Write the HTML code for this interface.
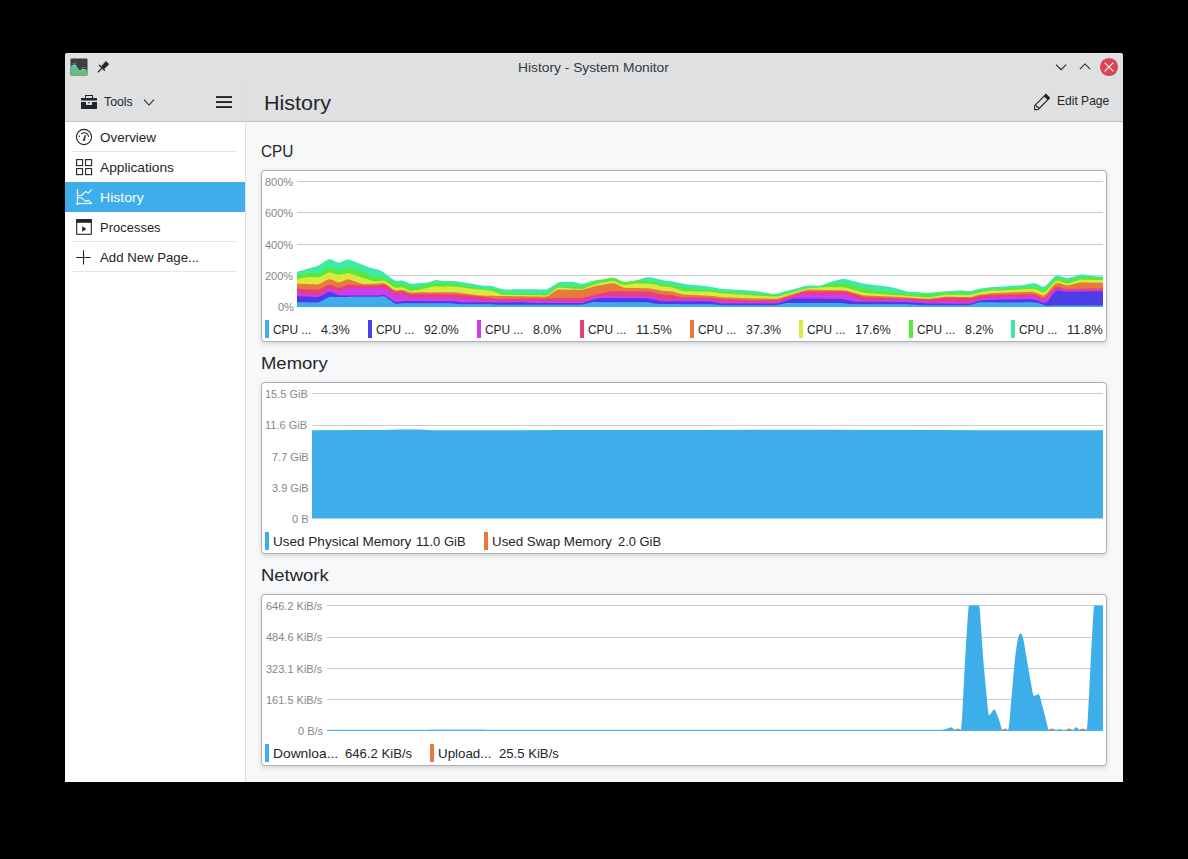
<!DOCTYPE html>
<html><head><meta charset="utf-8">
<style>
html,body{margin:0;padding:0;}
body{width:1188px;height:859px;background:#000;position:relative;overflow:hidden;font-family:"Liberation Sans",sans-serif;color:#232629;}
.a{position:absolute;}
.t{position:absolute;white-space:nowrap;line-height:1;transform-origin:0 0;}
.s13{font-size:13.33px;}
.s11{font-size:11px;color:#84878a;}
.s16{font-size:16px;}
.s20{font-size:20px;}
#win{left:65px;top:53px;width:1058px;height:729px;background:#fff;border-radius:3px 3px 0 0;overflow:hidden;}
#hdr{left:0;top:0;width:1058px;height:68px;background:#dee0e2;}
#hdrline{left:0;top:68px;width:1058px;height:1px;background:#bfc1c4;}
#side{left:0;top:69px;width:180px;height:660px;background:#fff;}
#vdiv{left:180px;top:29px;width:1px;height:700px;background:#dfdddc;}
#content{left:181px;top:69px;width:877px;height:660px;background:#f7f8f9;}
.sep{position:absolute;left:8px;width:164px;height:1px;background:#e3e4e6;}
.card{position:absolute;width:844px;height:170px;background:#fff;border:1px solid #aeb0b3;border-radius:4px;box-shadow:0 1.5px 4px rgba(0,0,0,0.14);}
.grid{position:absolute;height:1px;background:#c9cbce;}
.lb{position:absolute;width:4px;height:18px;}
</style></head><body>
<div id="win" class="a">
  <div id="hdr" class="a"></div>
  <div class="a" style="left:0;top:0;width:1058px;height:1px;background:#eceeef;"></div>
  <div id="hdrline" class="a"></div>
  <div id="side" class="a"></div>
  <div id="content" class="a"></div>
  <div id="vdiv" class="a"></div>
</div>

<!-- titlebar -->
<svg class="a" style="left:70px;top:58px" width="18" height="18" viewBox="0 0 18 18">
  <defs><linearGradient id="ag" x1="0" y1="0" x2="0" y2="1"><stop offset="0" stop-color="#4fc4b6"/><stop offset="1" stop-color="#74b865"/></linearGradient></defs>
  <rect x="0.5" y="0.5" width="17" height="17" rx="1" fill="#3a3f44"/>
  <path d="M0.5,9.6 C1.5,7.5 2.6,6.6 4.5,6.6 C6.5,6.6 8,11.5 9.6,11.9 C10.8,12.1 11.8,10.8 13.4,10.8 C15,10.8 16,11.8 17.5,12.4 L17.5,16.5 Q17.5,17.5 16.5,17.5 L1.5,17.5 Q0.5,17.5 0.5,16.5 Z" fill="url(#ag)"/>
  <g fill="#7f8a8c"><circle cx="3.3" cy="5.4" r="0.65"/><circle cx="5.5" cy="5.4" r="0.65"/><circle cx="12.5" cy="9.5" r="0.65"/><circle cx="14.5" cy="9.5" r="0.65"/></g>
  <g fill="#9fe0cf"><circle cx="3.4" cy="7.5" r="0.65"/><circle cx="5.4" cy="7.5" r="0.65"/><circle cx="12.5" cy="11.6" r="0.65"/><circle cx="14.3" cy="11.6" r="0.65"/></g>
</svg>
<svg class="a" style="left:96px;top:59px" width="16" height="16" viewBox="0 0 16 16">
  <path d="M2.4,12.7 L6,9.1" stroke="#232629" stroke-width="1.3" stroke-linecap="round"/>
  <path d="M3.4,6.3 L8.6,11.4" stroke="#232629" stroke-width="1.3" stroke-linecap="round"/>
  <path d="M5.3,7.4 L9.9,2.3 L12.9,5.2 L8.0,9.9 Z" fill="#232629" stroke="#232629" stroke-width="0.4" stroke-linejoin="round"/>
</svg>
<div class="t s13" style="left:518px;top:61px;color:#363a3e;transform:scaleX(1.034);">History - System Monitor</div>
<svg class="a" style="left:1054px;top:61px" width="14" height="10" viewBox="0 0 14 10">
  <path d="M2,3.6 L7.1,8.7 L12.2,3.6" fill="none" stroke="#232629" stroke-width="1.05"/>
</svg>
<svg class="a" style="left:1078px;top:60px" width="14" height="10" viewBox="0 0 14 10">
  <path d="M1.8,9.1 L7,3.9 L12.2,9.1" fill="none" stroke="#232629" stroke-width="1.05"/>
</svg>
<svg class="a" style="left:1099px;top:57px" width="20" height="20" viewBox="0 0 20 20">
  <circle cx="10" cy="10" r="9.1" fill="#da4453"/>
  <path d="M5.6,5.6 L14.4,14.4 M14.4,5.6 L5.6,14.4" stroke="#fff" stroke-width="1.1"/>
</svg>

<!-- sidebar header -->
<svg class="a" style="left:80px;top:94px" width="18" height="16" viewBox="0 0 18 16">
  <rect x="5.5" y="1.5" width="7" height="3" fill="none" stroke="#232629" stroke-width="1"/>
  <rect x="1" y="4" width="16" height="2.5" fill="#232629"/>
  <path d="M1,8 L6,8 L6,11 L12,11 L12,8 L17,8 L17,15 L1,15 Z" fill="#232629"/>
  <rect x="8" y="8.2" width="2" height="1.1" rx="0.5" fill="#232629"/>
</svg>
<div class="t s13" style="left:104px;top:95px;transform:scaleX(0.923);">Tools</div>
<svg class="a" style="left:142px;top:97px" width="14" height="10" viewBox="0 0 14 10">
  <path d="M2,2.6 L7,8 L12,2.6" fill="none" stroke="#232629" stroke-width="1.1"/>
</svg>
<svg class="a" style="left:214px;top:94px" width="20" height="16" viewBox="0 0 20 16">
  <rect x="2" y="2.1" width="16" height="1.9" fill="#232629"/>
  <rect x="2" y="7.1" width="16" height="1.9" fill="#232629"/>
  <rect x="2" y="12.1" width="16" height="1.9" fill="#232629"/>
</svg>

<!-- page header -->
<div class="t s20" style="left:263.5px;top:93px;transform:scaleX(1.075);">History</div>
<svg class="a" style="left:1033px;top:93px" width="18" height="18" viewBox="0 0 18 18">
  <path d="M1.6,16.6 L1.6,12.7 L12.9,1.4 L16.5,5 L5.3,16.4 Z" fill="none" stroke="#232629" stroke-width="1.1" stroke-linejoin="miter"/>
  <path d="M12.9,1.2 L16.8,5 L14.6,7.1 L10.9,3.3 Z" fill="#232629"/>
  <path d="M2.9,11.5 Q3.1,14.6 6.1,14.4" fill="none" stroke="#232629" stroke-width="1.1"/>
</svg>
<div class="t s13" style="left:1057px;top:94px;transform:scaleX(0.904);">Edit Page</div>

<!-- sidebar items -->
<div class="a" style="left:65px;top:182px;width:180px;height:30px;background:#3daee9;"></div>
<div class="a" style="left:73px;top:151px;width:164px;height:1px;background:#e3e4e6;"></div>
<div class="a" style="left:73px;top:241px;width:164px;height:1px;background:#e3e4e6;"></div>
<div class="a" style="left:73px;top:271px;width:164px;height:1px;background:#e3e4e6;"></div>

<svg class="a" style="left:75px;top:128px" width="18" height="18" viewBox="0 0 18 18">
  <circle cx="9" cy="9" r="7.6" fill="none" stroke="#232629" stroke-width="1.1"/>
  <path d="M6.4,5.6 A4.6,4.6 0 0 1 13.6,8.5" fill="none" stroke="#232629" stroke-width="1.1" stroke-linecap="round"/>
  <circle cx="4.4" cy="8.2" r="0.7" fill="#232629"/>
  <path d="M8,12.6 L9.6,12.6 L10.5,7.2 L10.2,7.1 Z" fill="#232629" stroke="#232629" stroke-width="0.6" stroke-linejoin="round"/>
</svg>
<div class="t s13" style="left:100px;top:131px;transform:scaleX(1.009);">Overview</div>

<svg class="a" style="left:75px;top:158px" width="18" height="18" viewBox="0 0 18 18">
  <rect x="1.6" y="1.6" width="6" height="6" fill="none" stroke="#232629" stroke-width="1.1"/>
  <rect x="10.6" y="1.6" width="6" height="6" fill="none" stroke="#232629" stroke-width="1.1"/>
  <rect x="1.6" y="10.6" width="6" height="6" fill="none" stroke="#232629" stroke-width="1.1"/>
  <rect x="10.6" y="10.6" width="6" height="6" fill="none" stroke="#232629" stroke-width="1.1"/>
</svg>
<div class="t s13" style="left:100px;top:161px;transform:scaleX(1.028);">Applications</div>

<svg class="a" style="left:75px;top:188px" width="18" height="18" viewBox="0 0 18 18">
  <path d="M2.5,1.2 L2.5,17" stroke="#fff" stroke-width="1.2"/>
  <path d="M1,15.5 L17,15.5" stroke="#fff" stroke-width="1.2"/>
  <path d="M2.5,7.5 L6.5,7.5 L10.7,3.4 L13.2,5.1 L16.7,1.7" fill="none" stroke="#fff" stroke-width="1.1"/>
  <path d="M2.5,9.7 L6.5,9.7 L10.7,13.6 L13.2,12.2 L16.5,15.4" fill="none" stroke="#fff" stroke-width="1.1"/>
</svg>
<div class="t s13" style="left:100px;top:191px;color:#fff;transform:scaleX(1.056);">History</div>

<svg class="a" style="left:75px;top:218px" width="18" height="18" viewBox="0 0 18 18">
  <rect x="1.7" y="1.7" width="14.6" height="14.6" fill="none" stroke="#232629" stroke-width="1.1"/>
  <rect x="1.2" y="1.2" width="15.6" height="3.6" fill="#232629"/>
  <path d="M7.2,8.2 L11.4,11 L7.2,13.8 Z" fill="#232629"/>
</svg>
<div class="t s13" style="left:100px;top:221px;transform:scaleX(0.974);">Processes</div>

<svg class="a" style="left:75px;top:248px" width="18" height="18" viewBox="0 0 18 18">
  <path d="M8.5,2.3 L8.5,16.6 M1.2,9.5 L15.7,9.5" stroke="#232629" stroke-width="1.1"/>
</svg>
<div class="t s13" style="left:100px;top:251px;transform:scaleX(0.99);">Add New Page...</div>

<!-- content headings -->
<div class="t s16" style="left:261px;top:144px;transform:scaleX(0.96);">CPU</div>
<div class="t s16" style="left:261px;top:356px;transform:scaleX(1.153);">Memory</div>
<div class="t s16" style="left:261px;top:568px;transform:scaleX(1.153);">Network</div>

<!-- CPU card -->
<div class="card" style="left:261px;top:170px;"></div>
<div class="grid" style="left:297px;top:181px;width:806px;"></div>
<div class="grid" style="left:297px;top:212px;width:806px;"></div>
<div class="grid" style="left:297px;top:244px;width:806px;"></div>
<div class="grid" style="left:297px;top:275px;width:806px;"></div>
<div class="t s11" style="left:265px;top:177px;">800%</div>
<div class="t s11" style="left:265px;top:208px;">600%</div>
<div class="t s11" style="left:265px;top:240px;">400%</div>
<div class="t s11" style="left:265px;top:271px;">200%</div>
<div class="t s11" style="left:278px;top:302px;">0%</div>
<svg class="a" style="left:0;top:0" width="1188" height="859" viewBox="0 0 1188 859">
<path fill="#3de9a3" d="M297.0,307.0 L297.0,271.73 L298.0,271.56 L299.0,271.34 L300.0,271.06 L301.0,270.77 L302.0,270.49 L303.0,270.20 L304.0,269.92 L305.0,269.63 L306.0,269.34 L307.0,269.06 L308.0,268.77 L309.0,268.49 L310.0,268.20 L311.0,267.91 L312.0,267.61 L313.0,267.31 L314.0,267.00 L315.0,266.69 L316.0,266.38 L317.0,266.03 L318.0,265.62 L319.0,265.14 L320.0,264.60 L321.0,263.98 L322.0,263.33 L323.0,262.68 L324.0,262.02 L325.0,261.37 L326.0,260.71 L327.0,260.06 L328.0,259.52 L329.0,259.21 L330.0,259.13 L331.0,259.28 L332.0,259.66 L333.0,260.16 L334.0,260.66 L335.0,261.16 L336.0,261.66 L337.0,262.12 L338.0,262.39 L339.0,262.48 L340.0,262.38 L341.0,262.09 L342.0,261.67 L343.0,261.24 L344.0,260.81 L345.0,260.39 L346.0,259.96 L347.0,259.69 L348.0,259.59 L349.0,259.65 L350.0,259.87 L351.0,260.26 L352.0,260.66 L353.0,261.05 L354.0,261.44 L355.0,261.84 L356.0,262.23 L357.0,262.63 L358.0,263.02 L359.0,263.41 L360.0,263.81 L361.0,264.20 L362.0,264.60 L363.0,265.00 L364.0,265.40 L365.0,265.79 L366.0,266.19 L367.0,266.59 L368.0,266.99 L369.0,267.38 L370.0,267.74 L371.0,268.05 L372.0,268.32 L373.0,268.55 L374.0,268.75 L375.0,268.95 L376.0,269.15 L377.0,269.35 L378.0,269.61 L379.0,269.95 L380.0,270.37 L381.0,270.86 L382.0,271.43 L383.0,272.04 L384.0,272.69 L385.0,273.38 L386.0,274.11 L387.0,274.87 L388.0,275.65 L389.0,276.42 L390.0,277.19 L391.0,277.97 L392.0,278.74 L393.0,279.51 L394.0,280.11 L395.0,280.54 L396.0,280.79 L397.0,280.86 L398.0,280.76 L399.0,280.66 L400.0,280.56 L401.0,280.51 L402.0,280.57 L403.0,280.74 L404.0,281.03 L405.0,281.43 L406.0,281.90 L407.0,282.37 L408.0,282.83 L409.0,283.21 L410.0,283.48 L411.0,283.64 L412.0,283.69 L413.0,283.63 L414.0,283.56 L415.0,283.49 L416.0,283.42 L417.0,283.35 L418.0,283.28 L419.0,283.21 L420.0,283.13 L421.0,283.06 L422.0,282.99 L423.0,282.92 L424.0,282.85 L425.0,282.78 L426.0,282.70 L427.0,282.56 L428.0,282.36 L429.0,282.10 L430.0,281.78 L431.0,281.41 L432.0,281.05 L433.0,280.68 L434.0,280.38 L435.0,280.18 L436.0,280.09 L437.0,280.11 L438.0,280.23 L439.0,280.40 L440.0,280.56 L441.0,280.73 L442.0,280.86 L443.0,280.96 L444.0,281.03 L445.0,281.06 L446.0,281.06 L447.0,281.06 L448.0,281.06 L449.0,281.06 L450.0,281.06 L451.0,281.06 L452.0,281.06 L453.0,281.06 L454.0,281.09 L455.0,281.15 L456.0,281.25 L457.0,281.37 L458.0,281.53 L459.0,281.68 L460.0,281.84 L461.0,281.99 L462.0,282.15 L463.0,282.30 L464.0,282.46 L465.0,282.62 L466.0,282.77 L467.0,282.93 L468.0,283.09 L469.0,283.25 L470.0,283.42 L471.0,283.59 L472.0,283.77 L473.0,283.94 L474.0,284.12 L475.0,284.29 L476.0,284.47 L477.0,284.65 L478.0,284.82 L479.0,285.00 L480.0,285.18 L481.0,285.35 L482.0,285.51 L483.0,285.63 L484.0,285.71 L485.0,285.76 L486.0,285.77 L487.0,285.77 L488.0,285.77 L489.0,285.77 L490.0,285.79 L491.0,285.88 L492.0,286.06 L493.0,286.31 L494.0,286.62 L495.0,286.98 L496.0,287.32 L497.0,287.64 L498.0,287.94 L499.0,288.24 L500.0,288.54 L501.0,288.84 L502.0,289.10 L503.0,289.30 L504.0,289.43 L505.0,289.50 L506.0,289.51 L507.0,289.49 L508.0,289.47 L509.0,289.45 L510.0,289.43 L511.0,289.41 L512.0,289.39 L513.0,289.37 L514.0,289.35 L515.0,289.33 L516.0,289.31 L517.0,289.29 L518.0,289.27 L519.0,289.25 L520.0,289.23 L521.0,289.21 L522.0,289.19 L523.0,289.17 L524.0,289.17 L525.0,289.17 L526.0,289.17 L527.0,289.19 L528.0,289.21 L529.0,289.23 L530.0,289.24 L531.0,289.26 L532.0,289.28 L533.0,289.30 L534.0,289.32 L535.0,289.34 L536.0,289.36 L537.0,289.37 L538.0,289.39 L539.0,289.41 L540.0,289.43 L541.0,289.45 L542.0,289.47 L543.0,289.48 L544.0,289.50 L545.0,289.52 L546.0,289.43 L547.0,289.21 L548.0,288.86 L549.0,288.37 L550.0,287.75 L551.0,287.11 L552.0,286.47 L553.0,285.83 L554.0,285.18 L555.0,284.54 L556.0,283.90 L557.0,283.26 L558.0,282.74 L559.0,282.35 L560.0,282.07 L561.0,281.92 L562.0,281.89 L563.0,281.86 L564.0,281.83 L565.0,281.80 L566.0,281.77 L567.0,281.74 L568.0,281.70 L569.0,281.67 L570.0,281.64 L571.0,281.64 L572.0,281.70 L573.0,281.81 L574.0,281.98 L575.0,282.21 L576.0,282.46 L577.0,282.71 L578.0,282.96 L579.0,283.21 L580.0,283.46 L581.0,283.65 L582.0,283.74 L583.0,283.72 L584.0,283.59 L585.0,283.34 L586.0,283.04 L587.0,282.74 L588.0,282.43 L589.0,282.13 L590.0,281.82 L591.0,281.52 L592.0,281.22 L593.0,280.91 L594.0,280.65 L595.0,280.43 L596.0,280.24 L597.0,280.10 L598.0,280.00 L599.0,279.90 L600.0,279.80 L601.0,279.70 L602.0,279.59 L603.0,279.46 L604.0,279.30 L605.0,279.12 L606.0,278.92 L607.0,278.71 L608.0,278.51 L609.0,278.30 L610.0,278.09 L611.0,277.88 L612.0,277.74 L613.0,277.74 L614.0,277.89 L615.0,278.17 L616.0,278.60 L617.0,279.10 L618.0,279.60 L619.0,280.10 L620.0,280.60 L621.0,281.10 L622.0,281.55 L623.0,281.87 L624.0,282.05 L625.0,282.11 L626.0,282.04 L627.0,281.88 L628.0,281.72 L629.0,281.57 L630.0,281.41 L631.0,281.25 L632.0,281.10 L633.0,280.94 L634.0,280.79 L635.0,280.63 L636.0,280.44 L637.0,280.22 L638.0,279.96 L639.0,279.66 L640.0,279.33 L641.0,279.00 L642.0,278.67 L643.0,278.33 L644.0,278.00 L645.0,277.67 L646.0,277.41 L647.0,277.24 L648.0,277.16 L649.0,277.18 L650.0,277.29 L651.0,277.41 L652.0,277.54 L653.0,277.70 L654.0,277.90 L655.0,278.13 L656.0,278.40 L657.0,278.70 L658.0,279.00 L659.0,279.30 L660.0,279.60 L661.0,279.87 L662.0,280.11 L663.0,280.30 L664.0,280.46 L665.0,280.57 L666.0,280.67 L667.0,280.77 L668.0,280.87 L669.0,280.97 L670.0,281.10 L671.0,281.24 L672.0,281.41 L673.0,281.59 L674.0,281.79 L675.0,281.99 L676.0,282.19 L677.0,282.39 L678.0,282.59 L679.0,282.79 L680.0,282.99 L681.0,283.19 L682.0,283.39 L683.0,283.59 L684.0,283.79 L685.0,283.99 L686.0,284.18 L687.0,284.34 L688.0,284.47 L689.0,284.57 L690.0,284.65 L691.0,284.71 L692.0,284.76 L693.0,284.82 L694.0,284.88 L695.0,284.96 L696.0,285.04 L697.0,285.13 L698.0,285.23 L699.0,285.33 L700.0,285.43 L701.0,285.53 L702.0,285.63 L703.0,285.73 L704.0,285.83 L705.0,285.93 L706.0,286.04 L707.0,286.17 L708.0,286.32 L709.0,286.48 L710.0,286.67 L711.0,286.87 L712.0,287.07 L713.0,287.27 L714.0,287.47 L715.0,287.67 L716.0,287.87 L717.0,288.07 L718.0,288.27 L719.0,288.45 L720.0,288.60 L721.0,288.73 L722.0,288.82 L723.0,288.89 L724.0,288.95 L725.0,289.02 L726.0,289.08 L727.0,289.14 L728.0,289.20 L729.0,289.27 L730.0,289.33 L731.0,289.39 L732.0,289.45 L733.0,289.52 L734.0,289.58 L735.0,289.64 L736.0,289.70 L737.0,289.77 L738.0,289.83 L739.0,289.89 L740.0,289.95 L741.0,290.02 L742.0,290.08 L743.0,290.14 L744.0,290.20 L745.0,290.27 L746.0,290.33 L747.0,290.39 L748.0,290.45 L749.0,290.52 L750.0,290.58 L751.0,290.64 L752.0,290.71 L753.0,290.79 L754.0,290.90 L755.0,291.02 L756.0,291.17 L757.0,291.34 L758.0,291.50 L759.0,291.67 L760.0,291.84 L761.0,292.00 L762.0,292.17 L763.0,292.34 L764.0,292.50 L765.0,292.67 L766.0,292.84 L767.0,293.00 L768.0,293.17 L769.0,293.34 L770.0,293.50 L771.0,293.67 L772.0,293.84 L773.0,293.93 L774.0,293.94 L775.0,293.86 L776.0,293.69 L777.0,293.44 L778.0,293.18 L779.0,292.91 L780.0,292.65 L781.0,292.39 L782.0,292.13 L783.0,291.87 L784.0,291.60 L785.0,291.34 L786.0,291.08 L787.0,290.82 L788.0,290.56 L789.0,290.29 L790.0,290.03 L791.0,289.77 L792.0,289.51 L793.0,289.24 L794.0,288.98 L795.0,288.72 L796.0,288.45 L797.0,288.19 L798.0,287.92 L799.0,287.65 L800.0,287.39 L801.0,287.12 L802.0,286.85 L803.0,286.59 L804.0,286.32 L805.0,286.05 L806.0,285.81 L807.0,285.63 L808.0,285.50 L809.0,285.44 L810.0,285.43 L811.0,285.47 L812.0,285.50 L813.0,285.53 L814.0,285.57 L815.0,285.60 L816.0,285.63 L817.0,285.67 L818.0,285.70 L819.0,285.67 L820.0,285.57 L821.0,285.38 L822.0,285.11 L823.0,284.77 L824.0,284.40 L825.0,284.03 L826.0,283.67 L827.0,283.30 L828.0,282.93 L829.0,282.57 L830.0,282.20 L831.0,281.84 L832.0,281.50 L833.0,281.19 L834.0,280.91 L835.0,280.66 L836.0,280.42 L837.0,280.19 L838.0,279.96 L839.0,279.73 L840.0,279.50 L841.0,279.27 L842.0,279.06 L843.0,278.94 L844.0,278.92 L845.0,278.99 L846.0,279.16 L847.0,279.41 L848.0,279.66 L849.0,279.91 L850.0,280.16 L851.0,280.41 L852.0,280.66 L853.0,280.91 L854.0,281.16 L855.0,281.41 L856.0,281.66 L857.0,281.91 L858.0,282.16 L859.0,282.41 L860.0,282.66 L861.0,282.91 L862.0,283.16 L863.0,283.39 L864.0,283.59 L865.0,283.77 L866.0,283.92 L867.0,284.04 L868.0,284.17 L869.0,284.29 L870.0,284.42 L871.0,284.54 L872.0,284.67 L873.0,284.79 L874.0,284.92 L875.0,285.04 L876.0,285.17 L877.0,285.29 L878.0,285.42 L879.0,285.54 L880.0,285.67 L881.0,285.79 L882.0,285.92 L883.0,286.04 L884.0,286.17 L885.0,286.29 L886.0,286.42 L887.0,286.56 L888.0,286.71 L889.0,286.86 L890.0,287.03 L891.0,287.20 L892.0,287.37 L893.0,287.54 L894.0,287.73 L895.0,287.96 L896.0,288.20 L897.0,288.48 L898.0,288.78 L899.0,289.08 L900.0,289.38 L901.0,289.68 L902.0,289.98 L903.0,290.28 L904.0,290.58 L905.0,290.88 L906.0,291.16 L907.0,291.39 L908.0,291.58 L909.0,291.72 L910.0,291.81 L911.0,291.87 L912.0,291.93 L913.0,291.99 L914.0,292.05 L915.0,292.11 L916.0,292.17 L917.0,292.23 L918.0,292.29 L919.0,292.35 L920.0,292.41 L921.0,292.47 L922.0,292.53 L923.0,292.59 L924.0,292.65 L925.0,292.71 L926.0,292.77 L927.0,292.82 L928.0,292.84 L929.0,292.82 L930.0,292.77 L931.0,292.70 L932.0,292.60 L933.0,292.50 L934.0,292.40 L935.0,292.30 L936.0,292.20 L937.0,292.10 L938.0,292.00 L939.0,291.90 L940.0,291.80 L941.0,291.70 L942.0,291.60 L943.0,291.50 L944.0,291.40 L945.0,291.32 L946.0,291.24 L947.0,291.18 L948.0,291.12 L949.0,291.07 L950.0,291.02 L951.0,290.97 L952.0,290.92 L953.0,290.87 L954.0,290.82 L955.0,290.77 L956.0,290.72 L957.0,290.67 L958.0,290.62 L959.0,290.57 L960.0,290.52 L961.0,290.49 L962.0,290.49 L963.0,290.52 L964.0,290.58 L965.0,290.67 L966.0,290.77 L967.0,290.87 L968.0,290.97 L969.0,291.05 L970.0,291.05 L971.0,290.97 L972.0,290.81 L973.0,290.57 L974.0,290.27 L975.0,289.97 L976.0,289.67 L977.0,289.37 L978.0,289.10 L979.0,288.86 L980.0,288.66 L981.0,288.48 L982.0,288.34 L983.0,288.21 L984.0,288.08 L985.0,287.95 L986.0,287.81 L987.0,287.68 L988.0,287.55 L989.0,287.41 L990.0,287.28 L991.0,287.15 L992.0,287.02 L993.0,286.97 L994.0,286.93 L995.0,286.90 L996.0,286.89 L997.0,286.89 L998.0,286.81 L999.0,286.74 L1000.0,286.66 L1001.0,286.59 L1002.0,286.51 L1003.0,286.44 L1004.0,286.36 L1005.0,286.29 L1006.0,286.21 L1007.0,286.14 L1008.0,286.06 L1009.0,285.99 L1010.0,285.91 L1011.0,285.84 L1012.0,285.76 L1013.0,285.70 L1014.0,285.63 L1015.0,285.58 L1016.0,285.52 L1017.0,285.47 L1018.0,285.42 L1019.0,285.37 L1020.0,285.32 L1021.0,285.27 L1022.0,285.18 L1023.0,285.07 L1024.0,284.93 L1025.0,284.76 L1026.0,284.57 L1027.0,284.37 L1028.0,284.18 L1029.0,283.99 L1030.0,283.80 L1031.0,283.60 L1032.0,283.41 L1033.0,283.25 L1034.0,283.22 L1035.0,283.33 L1036.0,283.58 L1037.0,283.96 L1038.0,284.46 L1039.0,284.96 L1040.0,285.46 L1041.0,285.96 L1042.0,286.46 L1043.0,286.68 L1044.0,286.59 L1045.0,286.19 L1046.0,285.48 L1047.0,284.46 L1048.0,283.42 L1049.0,282.38 L1050.0,281.35 L1051.0,280.31 L1052.0,279.27 L1053.0,278.23 L1054.0,277.19 L1055.0,276.39 L1056.0,275.85 L1057.0,275.58 L1058.0,275.58 L1059.0,275.84 L1060.0,276.13 L1061.0,276.43 L1062.0,276.72 L1063.0,277.01 L1064.0,277.30 L1065.0,277.59 L1066.0,277.80 L1067.0,277.89 L1068.0,277.87 L1069.0,277.74 L1070.0,277.49 L1071.0,277.23 L1072.0,276.96 L1073.0,276.69 L1074.0,276.42 L1075.0,276.15 L1076.0,275.88 L1077.0,275.61 L1078.0,275.34 L1079.0,275.08 L1080.0,274.81 L1081.0,274.62 L1082.0,274.52 L1083.0,274.51 L1084.0,274.58 L1085.0,274.75 L1086.0,274.91 L1087.0,275.07 L1088.0,275.24 L1089.0,275.40 L1090.0,275.57 L1091.0,275.73 L1092.0,275.90 L1093.0,276.06 L1094.0,276.19 L1095.0,276.29 L1096.0,276.36 L1097.0,276.39 L1098.0,276.39 L1099.0,276.39 L1100.0,276.39 L1101.0,276.39 L1102.0,276.39 L1103.0,276.39 L1103.0,307.0 Z"/>
<path fill="#58e93d" d="M297.0,307.0 L297.0,275.16 L298.0,275.06 L299.0,274.92 L300.0,274.76 L301.0,274.58 L302.0,274.41 L303.0,274.24 L304.0,274.07 L305.0,273.90 L306.0,273.73 L307.0,273.56 L308.0,273.38 L309.0,273.21 L310.0,273.05 L311.0,272.95 L312.0,272.91 L313.0,272.92 L314.0,273.00 L315.0,273.12 L316.0,273.25 L317.0,273.31 L318.0,273.22 L319.0,272.99 L320.0,272.60 L321.0,272.07 L322.0,271.46 L323.0,270.84 L324.0,270.23 L325.0,269.61 L326.0,269.00 L327.0,268.38 L328.0,267.87 L329.0,267.57 L330.0,267.49 L331.0,267.62 L332.0,267.97 L333.0,268.42 L334.0,268.88 L335.0,269.33 L336.0,269.78 L337.0,270.20 L338.0,270.45 L339.0,270.54 L340.0,270.47 L341.0,270.23 L342.0,269.87 L343.0,269.51 L344.0,269.14 L345.0,268.78 L346.0,268.42 L347.0,268.18 L348.0,268.07 L349.0,268.10 L350.0,268.26 L351.0,268.55 L352.0,268.84 L353.0,269.14 L354.0,269.43 L355.0,269.73 L356.0,270.02 L357.0,270.31 L358.0,270.61 L359.0,270.90 L360.0,271.20 L361.0,271.51 L362.0,271.83 L363.0,272.19 L364.0,272.56 L365.0,272.95 L366.0,273.35 L367.0,273.75 L368.0,274.15 L369.0,274.55 L370.0,274.95 L371.0,275.35 L372.0,275.75 L373.0,276.15 L374.0,276.47 L375.0,276.73 L376.0,276.91 L377.0,277.03 L378.0,277.07 L379.0,277.12 L380.0,277.16 L381.0,277.21 L382.0,277.26 L383.0,277.39 L384.0,277.63 L385.0,277.98 L386.0,278.45 L387.0,279.03 L388.0,279.63 L389.0,280.23 L390.0,280.83 L391.0,281.43 L392.0,282.03 L393.0,282.64 L394.0,283.10 L395.0,283.44 L396.0,283.64 L397.0,283.71 L398.0,283.64 L399.0,283.57 L400.0,283.51 L401.0,283.48 L402.0,283.57 L403.0,283.76 L404.0,284.06 L405.0,284.46 L406.0,284.93 L407.0,285.40 L408.0,285.86 L409.0,286.25 L410.0,286.53 L411.0,286.72 L412.0,286.81 L413.0,286.80 L414.0,286.77 L415.0,286.75 L416.0,286.72 L417.0,286.70 L418.0,286.67 L419.0,286.61 L420.0,286.50 L421.0,286.34 L422.0,286.14 L423.0,285.88 L424.0,285.61 L425.0,285.34 L426.0,285.08 L427.0,284.81 L428.0,284.54 L429.0,284.27 L430.0,284.01 L431.0,283.74 L432.0,283.47 L433.0,283.24 L434.0,283.07 L435.0,282.97 L436.0,282.93 L437.0,282.96 L438.0,283.01 L439.0,283.05 L440.0,283.10 L441.0,283.15 L442.0,283.20 L443.0,283.25 L444.0,283.30 L445.0,283.35 L446.0,283.40 L447.0,283.45 L448.0,283.50 L449.0,283.54 L450.0,283.59 L451.0,283.64 L452.0,283.69 L453.0,283.74 L454.0,283.82 L455.0,283.92 L456.0,284.05 L457.0,284.21 L458.0,284.39 L459.0,284.58 L460.0,284.76 L461.0,284.95 L462.0,285.13 L463.0,285.31 L464.0,285.50 L465.0,285.68 L466.0,285.87 L467.0,286.05 L468.0,286.24 L469.0,286.42 L470.0,286.61 L471.0,286.79 L472.0,286.98 L473.0,287.16 L474.0,287.34 L475.0,287.53 L476.0,287.71 L477.0,287.90 L478.0,288.07 L479.0,288.21 L480.0,288.34 L481.0,288.44 L482.0,288.53 L483.0,288.60 L484.0,288.68 L485.0,288.76 L486.0,288.84 L487.0,288.92 L488.0,289.00 L489.0,289.08 L490.0,289.16 L491.0,289.24 L492.0,289.32 L493.0,289.40 L494.0,289.55 L495.0,289.75 L496.0,290.03 L497.0,290.36 L498.0,290.76 L499.0,291.16 L500.0,291.56 L501.0,291.96 L502.0,292.32 L503.0,292.60 L504.0,292.80 L505.0,292.93 L506.0,292.98 L507.0,293.00 L508.0,293.02 L509.0,293.04 L510.0,293.06 L511.0,293.08 L512.0,293.09 L513.0,293.11 L514.0,293.13 L515.0,293.15 L516.0,293.17 L517.0,293.19 L518.0,293.21 L519.0,293.23 L520.0,293.25 L521.0,293.27 L522.0,293.29 L523.0,293.31 L524.0,293.33 L525.0,293.34 L526.0,293.36 L527.0,293.38 L528.0,293.40 L529.0,293.42 L530.0,293.44 L531.0,293.46 L532.0,293.48 L533.0,293.50 L534.0,293.52 L535.0,293.54 L536.0,293.56 L537.0,293.58 L538.0,293.59 L539.0,293.61 L540.0,293.63 L541.0,293.65 L542.0,293.67 L543.0,293.69 L544.0,293.71 L545.0,293.73 L546.0,293.61 L547.0,293.32 L548.0,292.86 L549.0,292.23 L550.0,291.43 L551.0,290.59 L552.0,289.76 L553.0,288.93 L554.0,288.09 L555.0,287.26 L556.0,286.55 L557.0,286.01 L558.0,285.65 L559.0,285.46 L560.0,285.44 L561.0,285.48 L562.0,285.51 L563.0,285.54 L564.0,285.58 L565.0,285.61 L566.0,285.64 L567.0,285.68 L568.0,285.71 L569.0,285.74 L570.0,285.78 L571.0,285.81 L572.0,285.84 L573.0,285.88 L574.0,285.91 L575.0,285.94 L576.0,285.98 L577.0,286.01 L578.0,286.04 L579.0,286.08 L580.0,286.11 L581.0,286.10 L582.0,286.01 L583.0,285.83 L584.0,285.56 L585.0,285.20 L586.0,284.79 L587.0,284.39 L588.0,283.98 L589.0,283.58 L590.0,283.17 L591.0,282.77 L592.0,282.36 L593.0,282.21 L594.0,282.07 L595.0,281.94 L596.0,281.82 L597.0,281.71 L598.0,281.36 L599.0,281.01 L600.0,280.66 L601.0,280.31 L602.0,279.97 L603.0,279.67 L604.0,279.39 L605.0,279.14 L606.0,278.92 L607.0,278.71 L608.0,278.51 L609.0,278.30 L610.0,278.09 L611.0,277.88 L612.0,277.74 L613.0,277.74 L614.0,277.89 L615.0,278.17 L616.0,278.60 L617.0,279.10 L618.0,279.60 L619.0,280.10 L620.0,280.60 L621.0,281.10 L622.0,281.55 L623.0,281.87 L624.0,282.05 L625.0,282.11 L626.0,282.04 L627.0,281.88 L628.0,281.72 L629.0,281.57 L630.0,281.41 L631.0,281.25 L632.0,281.10 L633.0,280.94 L634.0,280.79 L635.0,280.63 L636.0,280.52 L637.0,280.45 L638.0,280.43 L639.0,280.45 L640.0,280.52 L641.0,280.60 L642.0,280.67 L643.0,280.75 L644.0,280.82 L645.0,280.90 L646.0,280.97 L647.0,281.05 L648.0,281.12 L649.0,281.20 L650.0,281.27 L651.0,281.35 L652.0,281.42 L653.0,281.55 L654.0,281.72 L655.0,281.93 L656.0,282.19 L657.0,282.49 L658.0,282.79 L659.0,283.09 L660.0,283.39 L661.0,283.66 L662.0,283.87 L663.0,284.04 L664.0,284.16 L665.0,284.22 L666.0,284.27 L667.0,284.32 L668.0,284.37 L669.0,284.43 L670.0,284.54 L671.0,284.69 L672.0,284.88 L673.0,285.11 L674.0,285.38 L675.0,285.64 L676.0,285.91 L677.0,286.18 L678.0,286.44 L679.0,286.71 L680.0,286.98 L681.0,287.24 L682.0,287.49 L683.0,287.69 L684.0,287.85 L685.0,287.98 L686.0,288.07 L687.0,288.14 L688.0,288.21 L689.0,288.29 L690.0,288.36 L691.0,288.43 L692.0,288.50 L693.0,288.66 L694.0,288.81 L695.0,288.96 L696.0,289.10 L697.0,289.24 L698.0,289.29 L699.0,289.34 L700.0,289.39 L701.0,289.44 L702.0,289.49 L703.0,289.54 L704.0,289.59 L705.0,289.64 L706.0,289.69 L707.0,289.74 L708.0,289.79 L709.0,289.84 L710.0,289.89 L711.0,289.97 L712.0,290.06 L713.0,290.17 L714.0,290.31 L715.0,290.46 L716.0,290.61 L717.0,290.76 L718.0,290.91 L719.0,291.04 L720.0,291.16 L721.0,291.27 L722.0,291.35 L723.0,291.42 L724.0,291.48 L725.0,291.54 L726.0,291.61 L727.0,291.67 L728.0,291.73 L729.0,291.79 L730.0,291.86 L731.0,291.92 L732.0,291.98 L733.0,292.04 L734.0,292.11 L735.0,292.17 L736.0,292.23 L737.0,292.29 L738.0,292.36 L739.0,292.42 L740.0,292.48 L741.0,292.54 L742.0,292.61 L743.0,292.67 L744.0,292.73 L745.0,292.79 L746.0,292.86 L747.0,292.92 L748.0,292.98 L749.0,293.04 L750.0,293.11 L751.0,293.17 L752.0,293.23 L753.0,293.30 L754.0,293.37 L755.0,293.45 L756.0,293.54 L757.0,293.62 L758.0,293.71 L759.0,293.80 L760.0,293.89 L761.0,293.98 L762.0,294.07 L763.0,294.16 L764.0,294.25 L765.0,294.34 L766.0,294.43 L767.0,294.52 L768.0,294.61 L769.0,294.70 L770.0,294.79 L771.0,294.87 L772.0,294.96 L773.0,295.05 L774.0,295.14 L775.0,295.23 L776.0,295.28 L777.0,295.26 L778.0,295.16 L779.0,294.98 L780.0,294.73 L781.0,294.44 L782.0,294.15 L783.0,293.87 L784.0,293.58 L785.0,293.29 L786.0,293.00 L787.0,292.71 L788.0,292.42 L789.0,292.13 L790.0,291.85 L791.0,291.56 L792.0,291.27 L793.0,290.98 L794.0,290.70 L795.0,290.44 L796.0,290.18 L797.0,289.94 L798.0,289.70 L799.0,289.47 L800.0,289.24 L801.0,289.00 L802.0,288.77 L803.0,288.54 L804.0,288.30 L805.0,288.07 L806.0,287.85 L807.0,287.67 L808.0,287.54 L809.0,287.44 L810.0,287.38 L811.0,287.35 L812.0,287.31 L813.0,287.28 L814.0,287.25 L815.0,287.21 L816.0,287.18 L817.0,287.15 L818.0,287.11 L819.0,287.04 L820.0,286.93 L821.0,286.77 L822.0,286.56 L823.0,286.30 L824.0,286.04 L825.0,285.77 L826.0,285.50 L827.0,285.24 L828.0,284.97 L829.0,284.70 L830.0,284.44 L831.0,284.18 L832.0,283.97 L833.0,283.82 L834.0,283.72 L835.0,283.67 L836.0,283.67 L837.0,283.67 L838.0,283.67 L839.0,283.67 L840.0,283.67 L841.0,283.67 L842.0,283.67 L843.0,283.67 L844.0,283.70 L845.0,283.78 L846.0,283.91 L847.0,284.11 L848.0,284.35 L849.0,284.62 L850.0,284.90 L851.0,285.17 L852.0,285.44 L853.0,285.71 L854.0,285.99 L855.0,286.26 L856.0,286.53 L857.0,286.81 L858.0,287.08 L859.0,287.35 L860.0,287.62 L861.0,287.90 L862.0,288.17 L863.0,288.41 L864.0,288.63 L865.0,288.81 L866.0,288.96 L867.0,289.08 L868.0,289.21 L869.0,289.33 L870.0,289.45 L871.0,289.57 L872.0,289.70 L873.0,289.82 L874.0,289.94 L875.0,290.06 L876.0,290.19 L877.0,290.31 L878.0,290.43 L879.0,290.55 L880.0,290.67 L881.0,290.80 L882.0,290.92 L883.0,291.04 L884.0,291.16 L885.0,291.29 L886.0,291.41 L887.0,291.53 L888.0,291.65 L889.0,291.77 L890.0,291.90 L891.0,292.02 L892.0,292.14 L893.0,292.26 L894.0,292.38 L895.0,292.50 L896.0,292.60 L897.0,292.71 L898.0,292.81 L899.0,292.91 L900.0,293.01 L901.0,293.11 L902.0,293.21 L903.0,293.31 L904.0,293.41 L905.0,293.51 L906.0,293.60 L907.0,293.69 L908.0,293.76 L909.0,293.82 L910.0,293.87 L911.0,293.91 L912.0,293.95 L913.0,293.99 L914.0,294.03 L915.0,294.07 L916.0,294.11 L917.0,294.15 L918.0,294.19 L919.0,294.23 L920.0,294.27 L921.0,294.31 L922.0,294.35 L923.0,294.39 L924.0,294.43 L925.0,294.47 L926.0,294.51 L927.0,294.54 L928.0,294.53 L929.0,294.49 L930.0,294.42 L931.0,294.32 L932.0,294.20 L933.0,294.07 L934.0,293.95 L935.0,293.82 L936.0,293.70 L937.0,293.57 L938.0,293.45 L939.0,293.32 L940.0,293.20 L941.0,293.07 L942.0,292.95 L943.0,292.82 L944.0,292.71 L945.0,292.63 L946.0,292.57 L947.0,292.55 L948.0,292.55 L949.0,292.57 L950.0,292.58 L951.0,292.60 L952.0,292.62 L953.0,292.63 L954.0,292.65 L955.0,292.67 L956.0,292.68 L957.0,292.70 L958.0,292.72 L959.0,292.73 L960.0,292.75 L961.0,292.77 L962.0,292.78 L963.0,292.80 L964.0,292.82 L965.0,292.83 L966.0,292.85 L967.0,292.87 L968.0,292.88 L969.0,292.88 L970.0,292.82 L971.0,292.70 L972.0,292.51 L973.0,292.26 L974.0,291.96 L975.0,291.66 L976.0,291.36 L977.0,291.06 L978.0,290.79 L979.0,290.56 L980.0,290.37 L981.0,290.22 L982.0,290.10 L983.0,290.00 L984.0,289.89 L985.0,289.78 L986.0,289.68 L987.0,289.57 L988.0,289.47 L989.0,289.36 L990.0,289.25 L991.0,289.15 L992.0,289.04 L993.0,288.97 L994.0,288.90 L995.0,288.85 L996.0,288.80 L997.0,288.76 L998.0,288.70 L999.0,288.64 L1000.0,288.58 L1001.0,288.51 L1002.0,288.45 L1003.0,288.39 L1004.0,288.33 L1005.0,288.26 L1006.0,288.20 L1007.0,288.14 L1008.0,288.08 L1009.0,288.01 L1010.0,287.95 L1011.0,287.89 L1012.0,287.83 L1013.0,287.76 L1014.0,287.70 L1015.0,287.64 L1016.0,287.58 L1017.0,287.51 L1018.0,287.45 L1019.0,287.39 L1020.0,287.33 L1021.0,287.26 L1022.0,287.20 L1023.0,287.14 L1024.0,287.08 L1025.0,287.01 L1026.0,286.95 L1027.0,286.89 L1028.0,286.83 L1029.0,286.76 L1030.0,286.70 L1031.0,286.68 L1032.0,286.71 L1033.0,286.78 L1034.0,286.90 L1035.0,287.07 L1036.0,287.26 L1037.0,287.52 L1038.0,287.85 L1039.0,288.24 L1040.0,288.70 L1041.0,289.20 L1042.0,289.70 L1043.0,289.90 L1044.0,289.75 L1045.0,289.28 L1046.0,288.47 L1047.0,287.33 L1048.0,286.16 L1049.0,284.99 L1050.0,283.83 L1051.0,282.66 L1052.0,281.49 L1053.0,280.33 L1054.0,279.35 L1055.0,278.61 L1056.0,278.10 L1057.0,277.90 L1058.0,278.00 L1059.0,278.21 L1060.0,278.49 L1061.0,278.84 L1062.0,279.19 L1063.0,279.54 L1064.0,279.89 L1065.0,280.24 L1066.0,280.49 L1067.0,280.60 L1068.0,280.57 L1069.0,280.42 L1070.0,280.13 L1071.0,279.80 L1072.0,279.48 L1073.0,279.16 L1074.0,278.84 L1075.0,278.52 L1076.0,278.20 L1077.0,277.88 L1078.0,277.55 L1079.0,277.29 L1080.0,277.10 L1081.0,276.98 L1082.0,276.94 L1083.0,276.97 L1084.0,277.01 L1085.0,277.05 L1086.0,277.09 L1087.0,277.13 L1088.0,277.17 L1089.0,277.21 L1090.0,277.25 L1091.0,277.29 L1092.0,277.33 L1093.0,277.37 L1094.0,277.42 L1095.0,277.46 L1096.0,277.50 L1097.0,277.54 L1098.0,277.58 L1099.0,277.62 L1100.0,277.66 L1101.0,277.70 L1102.0,277.73 L1103.0,277.76 L1103.0,307.0 Z"/>
<path fill="#d9e93d" d="M297.0,307.0 L297.0,278.93 L298.0,278.81 L299.0,278.66 L300.0,278.46 L301.0,278.26 L302.0,278.06 L303.0,277.86 L304.0,277.66 L305.0,277.46 L306.0,277.28 L307.0,277.14 L308.0,277.06 L309.0,277.02 L310.0,277.03 L311.0,277.07 L312.0,277.10 L313.0,277.14 L314.0,277.18 L315.0,277.22 L316.0,277.26 L317.0,277.25 L318.0,277.13 L319.0,276.91 L320.0,276.58 L321.0,276.14 L322.0,275.64 L323.0,275.14 L324.0,274.64 L325.0,274.14 L326.0,273.64 L327.0,273.14 L328.0,272.73 L329.0,272.48 L330.0,272.41 L331.0,272.52 L332.0,272.79 L333.0,273.15 L334.0,273.52 L335.0,273.88 L336.0,274.24 L337.0,274.58 L338.0,274.79 L339.0,274.87 L340.0,274.82 L341.0,274.64 L342.0,274.37 L343.0,274.10 L344.0,273.83 L345.0,273.55 L346.0,273.28 L347.0,273.13 L348.0,273.10 L349.0,273.20 L350.0,273.43 L351.0,273.78 L352.0,274.13 L353.0,274.48 L354.0,274.83 L355.0,275.19 L356.0,275.54 L357.0,275.89 L358.0,276.25 L359.0,276.60 L360.0,276.95 L361.0,277.30 L362.0,277.63 L363.0,277.96 L364.0,278.27 L365.0,278.58 L366.0,278.88 L367.0,279.18 L368.0,279.48 L369.0,279.78 L370.0,280.08 L371.0,280.38 L372.0,280.68 L373.0,280.97 L374.0,281.18 L375.0,281.31 L376.0,281.34 L377.0,281.29 L378.0,281.15 L379.0,281.02 L380.0,280.88 L381.0,280.74 L382.0,280.61 L383.0,280.60 L384.0,280.76 L385.0,281.09 L386.0,281.59 L387.0,282.25 L388.0,282.96 L389.0,283.66 L390.0,284.36 L391.0,285.07 L392.0,285.77 L393.0,286.47 L394.0,287.02 L395.0,287.40 L396.0,287.62 L397.0,287.68 L398.0,287.58 L399.0,287.48 L400.0,287.38 L401.0,287.33 L402.0,287.41 L403.0,287.62 L404.0,287.95 L405.0,288.41 L406.0,288.95 L407.0,289.48 L408.0,290.01 L409.0,290.43 L410.0,290.71 L411.0,290.86 L412.0,290.86 L413.0,290.73 L414.0,290.58 L415.0,290.43 L416.0,290.28 L417.0,290.13 L418.0,289.98 L419.0,289.82 L420.0,289.64 L421.0,289.45 L422.0,289.24 L423.0,289.01 L424.0,288.78 L425.0,288.54 L426.0,288.31 L427.0,288.08 L428.0,287.85 L429.0,287.62 L430.0,287.38 L431.0,287.15 L432.0,286.92 L433.0,286.72 L434.0,286.56 L435.0,286.46 L436.0,286.40 L437.0,286.40 L438.0,286.41 L439.0,286.42 L440.0,286.43 L441.0,286.44 L442.0,286.46 L443.0,286.47 L444.0,286.48 L445.0,286.49 L446.0,286.51 L447.0,286.52 L448.0,286.53 L449.0,286.54 L450.0,286.55 L451.0,286.57 L452.0,286.58 L453.0,286.59 L454.0,286.63 L455.0,286.68 L456.0,286.76 L457.0,286.86 L458.0,286.98 L459.0,287.10 L460.0,287.23 L461.0,287.35 L462.0,287.47 L463.0,287.59 L464.0,287.71 L465.0,287.83 L466.0,287.96 L467.0,288.08 L468.0,288.20 L469.0,288.32 L470.0,288.44 L471.0,288.57 L472.0,288.69 L473.0,288.81 L474.0,288.93 L475.0,289.05 L476.0,289.18 L477.0,289.30 L478.0,289.42 L479.0,289.53 L480.0,289.65 L481.0,289.76 L482.0,289.86 L483.0,289.97 L484.0,290.08 L485.0,290.18 L486.0,290.29 L487.0,290.39 L488.0,290.50 L489.0,290.61 L490.0,290.71 L491.0,290.82 L492.0,290.93 L493.0,291.20 L494.0,291.53 L495.0,291.91 L496.0,292.35 L497.0,292.84 L498.0,293.21 L499.0,293.59 L500.0,293.94 L501.0,294.23 L502.0,294.44 L503.0,294.58 L504.0,294.65 L505.0,294.67 L506.0,294.69 L507.0,294.71 L508.0,294.73 L509.0,294.75 L510.0,294.77 L511.0,294.78 L512.0,294.80 L513.0,294.82 L514.0,294.84 L515.0,294.86 L516.0,294.88 L517.0,294.90 L518.0,294.91 L519.0,294.93 L520.0,294.95 L521.0,294.97 L522.0,294.99 L523.0,295.01 L524.0,295.03 L525.0,295.04 L526.0,295.06 L527.0,295.08 L528.0,295.10 L529.0,295.12 L530.0,295.14 L531.0,295.15 L532.0,295.17 L533.0,295.19 L534.0,295.21 L535.0,295.23 L536.0,295.25 L537.0,295.27 L538.0,295.28 L539.0,295.30 L540.0,295.32 L541.0,295.34 L542.0,295.36 L543.0,295.38 L544.0,295.40 L545.0,295.41 L546.0,295.30 L547.0,295.03 L548.0,294.59 L549.0,293.99 L550.0,293.23 L551.0,292.44 L552.0,291.65 L553.0,290.85 L554.0,290.06 L555.0,289.27 L556.0,288.60 L557.0,288.10 L558.0,287.78 L559.0,287.62 L560.0,287.64 L561.0,287.71 L562.0,287.77 L563.0,287.84 L564.0,287.91 L565.0,287.97 L566.0,288.04 L567.0,288.11 L568.0,288.17 L569.0,288.24 L570.0,288.31 L571.0,288.37 L572.0,288.44 L573.0,288.51 L574.0,288.57 L575.0,288.64 L576.0,288.71 L577.0,288.77 L578.0,288.84 L579.0,288.91 L580.0,288.97 L581.0,289.00 L582.0,288.92 L583.0,288.76 L584.0,288.50 L585.0,288.14 L586.0,287.74 L587.0,287.33 L588.0,286.93 L589.0,286.52 L590.0,286.12 L591.0,285.71 L592.0,285.31 L593.0,284.90 L594.0,284.54 L595.0,284.23 L596.0,283.95 L597.0,283.73 L598.0,283.55 L599.0,283.36 L600.0,283.18 L601.0,283.00 L602.0,282.82 L603.0,282.64 L604.0,282.45 L605.0,282.27 L606.0,282.09 L607.0,281.91 L608.0,281.73 L609.0,281.55 L610.0,281.36 L611.0,281.18 L612.0,281.06 L613.0,281.07 L614.0,281.21 L615.0,281.47 L616.0,281.86 L617.0,282.32 L618.0,282.78 L619.0,283.24 L620.0,283.69 L621.0,284.15 L622.0,284.56 L623.0,284.85 L624.0,285.02 L625.0,285.06 L626.0,284.98 L627.0,284.83 L628.0,284.67 L629.0,284.51 L630.0,284.36 L631.0,284.20 L632.0,284.04 L633.0,283.89 L634.0,283.73 L635.0,283.58 L636.0,283.46 L637.0,283.38 L638.0,283.34 L639.0,283.35 L640.0,283.39 L641.0,283.44 L642.0,283.49 L643.0,283.54 L644.0,283.59 L645.0,283.64 L646.0,283.69 L647.0,283.74 L648.0,283.79 L649.0,283.84 L650.0,283.89 L651.0,283.94 L652.0,284.00 L653.0,284.10 L654.0,284.26 L655.0,284.46 L656.0,284.71 L657.0,285.01 L658.0,285.31 L659.0,285.61 L660.0,285.91 L661.0,286.18 L662.0,286.40 L663.0,286.57 L664.0,286.68 L665.0,286.75 L666.0,286.80 L667.0,286.85 L668.0,286.90 L669.0,286.96 L670.0,287.08 L671.0,287.26 L672.0,287.49 L673.0,287.78 L674.0,288.12 L675.0,288.45 L676.0,288.78 L677.0,289.12 L678.0,289.45 L679.0,289.78 L680.0,290.12 L681.0,290.45 L682.0,290.74 L683.0,290.97 L684.0,291.13 L685.0,291.22 L686.0,291.25 L687.0,291.25 L688.0,291.25 L689.0,291.25 L690.0,291.25 L691.0,291.25 L692.0,291.25 L693.0,291.33 L694.0,291.41 L695.0,291.50 L696.0,291.58 L697.0,291.67 L698.0,291.67 L699.0,291.67 L700.0,291.67 L701.0,291.67 L702.0,291.67 L703.0,291.67 L704.0,291.67 L705.0,291.67 L706.0,291.67 L707.0,291.67 L708.0,291.67 L709.0,291.67 L710.0,291.67 L711.0,291.72 L712.0,291.81 L713.0,291.93 L714.0,292.10 L715.0,292.30 L716.0,292.50 L717.0,292.70 L718.0,292.90 L719.0,293.08 L720.0,293.23 L721.0,293.36 L722.0,293.45 L723.0,293.52 L724.0,293.58 L725.0,293.65 L726.0,293.71 L727.0,293.77 L728.0,293.83 L729.0,293.90 L730.0,293.96 L731.0,294.02 L732.0,294.08 L733.0,294.15 L734.0,294.21 L735.0,294.27 L736.0,294.33 L737.0,294.40 L738.0,294.46 L739.0,294.52 L740.0,294.58 L741.0,294.65 L742.0,294.71 L743.0,294.77 L744.0,294.83 L745.0,294.90 L746.0,294.96 L747.0,295.02 L748.0,295.08 L749.0,295.15 L750.0,295.21 L751.0,295.27 L752.0,295.33 L753.0,295.39 L754.0,295.45 L755.0,295.51 L756.0,295.57 L757.0,295.62 L758.0,295.67 L759.0,295.73 L760.0,295.78 L761.0,295.83 L762.0,295.89 L763.0,295.94 L764.0,295.99 L765.0,296.05 L766.0,296.10 L767.0,296.16 L768.0,296.21 L769.0,296.26 L770.0,296.32 L771.0,296.37 L772.0,296.42 L773.0,296.48 L774.0,296.53 L775.0,296.58 L776.0,296.60 L777.0,296.55 L778.0,296.43 L779.0,296.25 L780.0,295.99 L781.0,295.71 L782.0,295.42 L783.0,295.13 L784.0,294.84 L785.0,294.55 L786.0,294.26 L787.0,293.97 L788.0,293.69 L789.0,293.40 L790.0,293.11 L791.0,292.82 L792.0,292.53 L793.0,292.24 L794.0,291.96 L795.0,291.68 L796.0,291.40 L797.0,291.13 L798.0,290.87 L799.0,290.60 L800.0,290.33 L801.0,290.07 L802.0,289.80 L803.0,289.53 L804.0,289.27 L805.0,289.00 L806.0,288.75 L807.0,288.54 L808.0,288.37 L809.0,288.24 L810.0,288.16 L811.0,288.10 L812.0,288.04 L813.0,287.98 L814.0,287.92 L815.0,287.86 L816.0,287.80 L817.0,287.74 L818.0,287.68 L819.0,287.62 L820.0,287.56 L821.0,287.50 L822.0,287.44 L823.0,287.38 L824.0,287.32 L825.0,287.26 L826.0,287.20 L827.0,287.14 L828.0,287.11 L829.0,287.09 L830.0,287.08 L831.0,287.10 L832.0,287.12 L833.0,287.15 L834.0,287.17 L835.0,287.20 L836.0,287.22 L837.0,287.25 L838.0,287.27 L839.0,287.30 L840.0,287.32 L841.0,287.35 L842.0,287.37 L843.0,287.40 L844.0,287.45 L845.0,287.55 L846.0,287.71 L847.0,287.93 L848.0,288.20 L849.0,288.49 L850.0,288.79 L851.0,289.08 L852.0,289.38 L853.0,289.67 L854.0,289.97 L855.0,290.26 L856.0,290.56 L857.0,290.85 L858.0,291.15 L859.0,291.45 L860.0,291.74 L861.0,292.04 L862.0,292.33 L863.0,292.58 L864.0,292.79 L865.0,292.95 L866.0,293.06 L867.0,293.13 L868.0,293.20 L869.0,293.27 L870.0,293.34 L871.0,293.40 L872.0,293.47 L873.0,293.54 L874.0,293.61 L875.0,293.67 L876.0,293.74 L877.0,293.81 L878.0,293.88 L879.0,293.95 L880.0,294.01 L881.0,294.08 L882.0,294.15 L883.0,294.22 L884.0,294.29 L885.0,294.35 L886.0,294.42 L887.0,294.49 L888.0,294.56 L889.0,294.63 L890.0,294.69 L891.0,294.76 L892.0,294.83 L893.0,294.90 L894.0,294.97 L895.0,295.03 L896.0,295.10 L897.0,295.17 L898.0,295.23 L899.0,295.30 L900.0,295.37 L901.0,295.43 L902.0,295.50 L903.0,295.57 L904.0,295.63 L905.0,295.70 L906.0,295.77 L907.0,295.84 L908.0,295.91 L909.0,295.99 L910.0,296.07 L911.0,296.15 L912.0,296.23 L913.0,296.31 L914.0,296.39 L915.0,296.47 L916.0,296.55 L917.0,296.63 L918.0,296.71 L919.0,296.79 L920.0,296.87 L921.0,296.95 L922.0,297.03 L923.0,297.11 L924.0,297.19 L925.0,297.27 L926.0,297.35 L927.0,297.41 L928.0,297.42 L929.0,297.38 L930.0,297.29 L931.0,297.15 L932.0,296.98 L933.0,296.80 L934.0,296.63 L935.0,296.45 L936.0,296.28 L937.0,296.10 L938.0,295.93 L939.0,295.75 L940.0,295.58 L941.0,295.40 L942.0,295.23 L943.0,295.05 L944.0,294.90 L945.0,294.78 L946.0,294.70 L947.0,294.66 L948.0,294.65 L949.0,294.67 L950.0,294.69 L951.0,294.70 L952.0,294.72 L953.0,294.74 L954.0,294.75 L955.0,294.77 L956.0,294.79 L957.0,294.80 L958.0,294.82 L959.0,294.84 L960.0,294.85 L961.0,294.87 L962.0,294.89 L963.0,294.90 L964.0,294.92 L965.0,294.94 L966.0,294.95 L967.0,294.97 L968.0,294.99 L969.0,294.99 L970.0,294.93 L971.0,294.80 L972.0,294.61 L973.0,294.36 L974.0,294.06 L975.0,293.76 L976.0,293.46 L977.0,293.16 L978.0,292.88 L979.0,292.64 L980.0,292.41 L981.0,292.22 L982.0,292.06 L983.0,291.90 L984.0,291.74 L985.0,291.58 L986.0,291.42 L987.0,291.26 L988.0,291.10 L989.0,290.94 L990.0,290.78 L991.0,290.62 L992.0,290.46 L993.0,290.45 L994.0,290.47 L995.0,290.50 L996.0,290.56 L997.0,290.64 L998.0,290.59 L999.0,290.54 L1000.0,290.49 L1001.0,290.44 L1002.0,290.39 L1003.0,290.34 L1004.0,290.29 L1005.0,290.24 L1006.0,290.19 L1007.0,290.14 L1008.0,290.09 L1009.0,290.04 L1010.0,289.99 L1011.0,289.94 L1012.0,289.89 L1013.0,289.84 L1014.0,289.79 L1015.0,289.74 L1016.0,289.69 L1017.0,289.64 L1018.0,289.59 L1019.0,289.54 L1020.0,289.49 L1021.0,289.44 L1022.0,289.39 L1023.0,289.34 L1024.0,289.29 L1025.0,289.24 L1026.0,289.19 L1027.0,289.14 L1028.0,289.09 L1029.0,289.04 L1030.0,288.99 L1031.0,288.98 L1032.0,289.02 L1033.0,289.10 L1034.0,289.22 L1035.0,289.38 L1036.0,289.58 L1037.0,289.86 L1038.0,290.22 L1039.0,290.67 L1040.0,291.19 L1041.0,291.76 L1042.0,292.33 L1043.0,292.59 L1044.0,292.51 L1045.0,292.09 L1046.0,291.33 L1047.0,290.23 L1048.0,289.10 L1049.0,287.98 L1050.0,286.85 L1051.0,285.73 L1052.0,284.60 L1053.0,283.48 L1054.0,282.51 L1055.0,281.73 L1056.0,281.15 L1057.0,280.86 L1058.0,280.87 L1059.0,281.02 L1060.0,281.27 L1061.0,281.62 L1062.0,281.97 L1063.0,282.32 L1064.0,282.67 L1065.0,283.02 L1066.0,283.26 L1067.0,283.38 L1068.0,283.35 L1069.0,283.20 L1070.0,282.90 L1071.0,282.58 L1072.0,282.26 L1073.0,281.94 L1074.0,281.62 L1075.0,281.30 L1076.0,280.97 L1077.0,280.65 L1078.0,280.33 L1079.0,280.07 L1080.0,279.87 L1081.0,279.74 L1082.0,279.68 L1083.0,279.69 L1084.0,279.71 L1085.0,279.73 L1086.0,279.75 L1087.0,279.77 L1088.0,279.79 L1089.0,279.81 L1090.0,279.83 L1091.0,279.85 L1092.0,279.87 L1093.0,279.89 L1094.0,279.91 L1095.0,279.93 L1096.0,279.95 L1097.0,279.97 L1098.0,279.99 L1099.0,280.01 L1100.0,280.03 L1101.0,280.05 L1102.0,280.07 L1103.0,280.08 L1103.0,307.0 Z"/>
<path fill="#e9783d" d="M297.0,307.0 L297.0,283.69 L298.0,283.71 L299.0,283.75 L300.0,283.78 L301.0,283.82 L302.0,283.86 L303.0,283.90 L304.0,283.94 L305.0,283.98 L306.0,284.02 L307.0,284.06 L308.0,284.10 L309.0,284.14 L310.0,284.18 L311.0,284.21 L312.0,284.25 L313.0,284.29 L314.0,284.33 L315.0,284.37 L316.0,284.41 L317.0,284.40 L318.0,284.27 L319.0,284.03 L320.0,283.68 L321.0,283.20 L322.0,282.66 L323.0,282.13 L324.0,281.59 L325.0,281.05 L326.0,280.51 L327.0,279.97 L328.0,279.53 L329.0,279.29 L330.0,279.24 L331.0,279.40 L332.0,279.75 L333.0,280.21 L334.0,280.66 L335.0,281.11 L336.0,281.57 L337.0,281.98 L338.0,282.23 L339.0,282.30 L340.0,282.19 L341.0,281.92 L342.0,281.51 L343.0,281.10 L344.0,280.69 L345.0,280.28 L346.0,279.87 L347.0,279.61 L348.0,279.50 L349.0,279.54 L350.0,279.74 L351.0,280.09 L352.0,280.44 L353.0,280.79 L354.0,281.15 L355.0,281.50 L356.0,281.85 L357.0,282.21 L358.0,282.56 L359.0,282.91 L360.0,283.27 L361.0,283.57 L362.0,283.80 L363.0,283.95 L364.0,284.02 L365.0,284.02 L366.0,284.00 L367.0,283.97 L368.0,283.95 L369.0,283.92 L370.0,283.90 L371.0,283.87 L372.0,283.85 L373.0,283.82 L374.0,283.80 L375.0,283.77 L376.0,283.75 L377.0,283.72 L378.0,283.68 L379.0,283.60 L380.0,283.49 L381.0,283.36 L382.0,283.20 L383.0,283.17 L384.0,283.32 L385.0,283.65 L386.0,284.16 L387.0,284.84 L388.0,285.57 L389.0,286.30 L390.0,287.02 L391.0,287.75 L392.0,288.48 L393.0,289.20 L394.0,289.76 L395.0,290.14 L396.0,290.35 L397.0,290.39 L398.0,290.26 L399.0,290.12 L400.0,289.99 L401.0,289.90 L402.0,289.92 L403.0,290.05 L404.0,290.28 L405.0,290.62 L406.0,291.02 L407.0,291.42 L408.0,291.82 L409.0,292.14 L410.0,292.37 L411.0,292.52 L412.0,292.57 L413.0,292.53 L414.0,292.48 L415.0,292.43 L416.0,292.38 L417.0,292.33 L418.0,292.28 L419.0,292.24 L420.0,292.21 L421.0,292.19 L422.0,292.17 L423.0,292.17 L424.0,292.17 L425.0,292.17 L426.0,292.17 L427.0,292.17 L428.0,292.17 L429.0,292.17 L430.0,292.17 L431.0,292.17 L432.0,292.17 L433.0,292.17 L434.0,292.17 L435.0,292.17 L436.0,292.17 L437.0,292.17 L438.0,292.17 L439.0,292.17 L440.0,292.17 L441.0,292.17 L442.0,292.17 L443.0,292.17 L444.0,292.17 L445.0,292.17 L446.0,292.17 L447.0,292.17 L448.0,292.17 L449.0,292.17 L450.0,292.17 L451.0,292.17 L452.0,292.17 L453.0,292.17 L454.0,292.20 L455.0,292.25 L456.0,292.33 L457.0,292.44 L458.0,292.58 L459.0,292.71 L460.0,292.85 L461.0,292.99 L462.0,293.12 L463.0,293.26 L464.0,293.39 L465.0,293.53 L466.0,293.67 L467.0,293.80 L468.0,293.94 L469.0,294.07 L470.0,294.21 L471.0,294.34 L472.0,294.48 L473.0,294.62 L474.0,294.75 L475.0,294.89 L476.0,295.02 L477.0,295.16 L478.0,295.28 L479.0,295.37 L480.0,295.45 L481.0,295.50 L482.0,295.53 L483.0,295.56 L484.0,295.58 L485.0,295.61 L486.0,295.64 L487.0,295.66 L488.0,295.69 L489.0,295.72 L490.0,295.74 L491.0,295.77 L492.0,295.80 L493.0,295.82 L494.0,295.85 L495.0,295.87 L496.0,295.89 L497.0,295.91 L498.0,295.92 L499.0,295.94 L500.0,295.96 L501.0,295.97 L502.0,295.99 L503.0,296.00 L504.0,296.02 L505.0,296.04 L506.0,296.05 L507.0,296.07 L508.0,296.09 L509.0,296.10 L510.0,296.12 L511.0,296.13 L512.0,296.15 L513.0,296.17 L514.0,296.18 L515.0,296.20 L516.0,296.21 L517.0,296.23 L518.0,296.25 L519.0,296.26 L520.0,296.28 L521.0,296.29 L522.0,296.31 L523.0,296.33 L524.0,296.34 L525.0,296.36 L526.0,296.38 L527.0,296.39 L528.0,296.41 L529.0,296.42 L530.0,296.44 L531.0,296.46 L532.0,296.47 L533.0,296.49 L534.0,296.50 L535.0,296.52 L536.0,296.54 L537.0,296.55 L538.0,296.57 L539.0,296.59 L540.0,296.60 L541.0,296.62 L542.0,296.63 L543.0,296.65 L544.0,296.67 L545.0,296.68 L546.0,296.58 L547.0,296.33 L548.0,295.94 L549.0,295.41 L550.0,294.73 L551.0,294.02 L552.0,293.31 L553.0,292.60 L554.0,291.89 L555.0,291.18 L556.0,290.58 L557.0,290.12 L558.0,289.80 L559.0,289.63 L560.0,289.61 L561.0,289.62 L562.0,289.64 L563.0,289.66 L564.0,289.67 L565.0,289.69 L566.0,289.71 L567.0,289.72 L568.0,289.74 L569.0,289.76 L570.0,289.77 L571.0,289.79 L572.0,289.81 L573.0,289.82 L574.0,289.84 L575.0,289.86 L576.0,289.87 L577.0,289.89 L578.0,289.91 L579.0,289.92 L580.0,289.94 L581.0,289.93 L582.0,289.85 L583.0,289.71 L584.0,289.51 L585.0,289.24 L586.0,288.93 L587.0,288.63 L588.0,288.32 L589.0,288.02 L590.0,287.72 L591.0,287.41 L592.0,287.11 L593.0,286.80 L594.0,286.52 L595.0,286.27 L596.0,286.04 L597.0,285.83 L598.0,285.65 L599.0,285.47 L600.0,285.29 L601.0,285.10 L602.0,284.92 L603.0,284.74 L604.0,284.56 L605.0,284.38 L606.0,284.20 L607.0,284.01 L608.0,283.83 L609.0,283.65 L610.0,283.47 L611.0,283.29 L612.0,283.17 L613.0,283.19 L614.0,283.35 L615.0,283.64 L616.0,284.07 L617.0,284.57 L618.0,285.07 L619.0,285.57 L620.0,286.07 L621.0,286.57 L622.0,287.03 L623.0,287.40 L624.0,287.67 L625.0,287.84 L626.0,287.92 L627.0,287.94 L628.0,287.95 L629.0,287.97 L630.0,287.99 L631.0,288.00 L632.0,288.02 L633.0,288.04 L634.0,288.05 L635.0,288.07 L636.0,288.09 L637.0,288.10 L638.0,288.12 L639.0,288.14 L640.0,288.15 L641.0,288.17 L642.0,288.19 L643.0,288.20 L644.0,288.22 L645.0,288.24 L646.0,288.25 L647.0,288.27 L648.0,288.33 L649.0,288.42 L650.0,288.54 L651.0,288.70 L652.0,288.89 L653.0,289.07 L654.0,289.26 L655.0,289.45 L656.0,289.64 L657.0,289.82 L658.0,290.01 L659.0,290.20 L660.0,290.39 L661.0,290.56 L662.0,290.70 L663.0,290.81 L664.0,290.90 L665.0,290.96 L666.0,291.01 L667.0,291.06 L668.0,291.11 L669.0,291.17 L670.0,291.27 L671.0,291.42 L672.0,291.61 L673.0,291.84 L674.0,292.11 L675.0,292.38 L676.0,292.64 L677.0,292.91 L678.0,293.18 L679.0,293.44 L680.0,293.71 L681.0,293.98 L682.0,294.22 L683.0,294.41 L684.0,294.55 L685.0,294.65 L686.0,294.71 L687.0,294.74 L688.0,294.78 L689.0,294.82 L690.0,294.85 L691.0,294.89 L692.0,294.92 L693.0,294.96 L694.0,295.00 L695.0,295.04 L696.0,295.09 L697.0,295.13 L698.0,295.18 L699.0,295.23 L700.0,295.28 L701.0,295.33 L702.0,295.38 L703.0,295.43 L704.0,295.48 L705.0,295.53 L706.0,295.58 L707.0,295.63 L708.0,295.68 L709.0,295.73 L710.0,295.79 L711.0,295.86 L712.0,295.95 L713.0,296.07 L714.0,296.20 L715.0,296.35 L716.0,296.50 L717.0,296.65 L718.0,296.80 L719.0,296.93 L720.0,297.04 L721.0,297.13 L722.0,297.20 L723.0,297.24 L724.0,297.28 L725.0,297.32 L726.0,297.35 L727.0,297.39 L728.0,297.43 L729.0,297.47 L730.0,297.50 L731.0,297.54 L732.0,297.58 L733.0,297.62 L734.0,297.65 L735.0,297.69 L736.0,297.73 L737.0,297.77 L738.0,297.80 L739.0,297.84 L740.0,297.88 L741.0,297.92 L742.0,297.95 L743.0,297.99 L744.0,298.03 L745.0,298.07 L746.0,298.10 L747.0,298.14 L748.0,298.18 L749.0,298.22 L750.0,298.25 L751.0,298.29 L752.0,298.33 L753.0,298.36 L754.0,298.39 L755.0,298.42 L756.0,298.44 L757.0,298.46 L758.0,298.47 L759.0,298.49 L760.0,298.51 L761.0,298.53 L762.0,298.54 L763.0,298.56 L764.0,298.58 L765.0,298.60 L766.0,298.62 L767.0,298.63 L768.0,298.65 L769.0,298.67 L770.0,298.69 L771.0,298.71 L772.0,298.72 L773.0,298.74 L774.0,298.76 L775.0,298.78 L776.0,298.76 L777.0,298.68 L778.0,298.53 L779.0,298.32 L780.0,298.04 L781.0,297.73 L782.0,297.41 L783.0,297.10 L784.0,296.79 L785.0,296.48 L786.0,296.16 L787.0,295.85 L788.0,295.54 L789.0,295.23 L790.0,294.91 L791.0,294.60 L792.0,294.29 L793.0,293.98 L794.0,293.67 L795.0,293.36 L796.0,293.05 L797.0,292.75 L798.0,292.45 L799.0,292.15 L800.0,291.85 L801.0,291.55 L802.0,291.25 L803.0,290.95 L804.0,290.65 L805.0,290.35 L806.0,290.07 L807.0,289.86 L808.0,289.72 L809.0,289.63 L810.0,289.62 L811.0,289.64 L812.0,289.66 L813.0,289.68 L814.0,289.70 L815.0,289.73 L816.0,289.75 L817.0,289.77 L818.0,289.79 L819.0,289.82 L820.0,289.84 L821.0,289.86 L822.0,289.88 L823.0,289.90 L824.0,289.93 L825.0,289.95 L826.0,289.97 L827.0,289.99 L828.0,290.02 L829.0,290.04 L830.0,290.06 L831.0,290.08 L832.0,290.10 L833.0,290.13 L834.0,290.15 L835.0,290.17 L836.0,290.19 L837.0,290.22 L838.0,290.24 L839.0,290.26 L840.0,290.28 L841.0,290.30 L842.0,290.33 L843.0,290.35 L844.0,290.40 L845.0,290.49 L846.0,290.64 L847.0,290.84 L848.0,291.08 L849.0,291.36 L850.0,291.63 L851.0,291.90 L852.0,292.18 L853.0,292.45 L854.0,292.72 L855.0,292.99 L856.0,293.27 L857.0,293.54 L858.0,293.81 L859.0,294.08 L860.0,294.36 L861.0,294.63 L862.0,294.90 L863.0,295.13 L864.0,295.31 L865.0,295.45 L866.0,295.53 L867.0,295.58 L868.0,295.62 L869.0,295.66 L870.0,295.70 L871.0,295.74 L872.0,295.78 L873.0,295.82 L874.0,295.86 L875.0,295.90 L876.0,295.94 L877.0,295.98 L878.0,296.02 L879.0,296.06 L880.0,296.11 L881.0,296.15 L882.0,296.19 L883.0,296.23 L884.0,296.27 L885.0,296.31 L886.0,296.35 L887.0,296.39 L888.0,296.43 L889.0,296.47 L890.0,296.51 L891.0,296.55 L892.0,296.59 L893.0,296.64 L894.0,296.68 L895.0,296.73 L896.0,296.78 L897.0,296.84 L898.0,296.90 L899.0,296.97 L900.0,297.03 L901.0,297.09 L902.0,297.15 L903.0,297.22 L904.0,297.28 L905.0,297.34 L906.0,297.40 L907.0,297.47 L908.0,297.53 L909.0,297.59 L910.0,297.65 L911.0,297.72 L912.0,297.78 L913.0,297.84 L914.0,297.90 L915.0,297.97 L916.0,298.03 L917.0,298.09 L918.0,298.15 L919.0,298.22 L920.0,298.28 L921.0,298.34 L922.0,298.40 L923.0,298.47 L924.0,298.53 L925.0,298.59 L926.0,298.65 L927.0,298.70 L928.0,298.72 L929.0,298.69 L930.0,298.63 L931.0,298.53 L932.0,298.41 L933.0,298.28 L934.0,298.16 L935.0,298.03 L936.0,297.91 L937.0,297.78 L938.0,297.66 L939.0,297.53 L940.0,297.41 L941.0,297.28 L942.0,297.16 L943.0,297.03 L944.0,296.92 L945.0,296.84 L946.0,296.78 L947.0,296.76 L948.0,296.76 L949.0,296.78 L950.0,296.79 L951.0,296.81 L952.0,296.83 L953.0,296.84 L954.0,296.86 L955.0,296.88 L956.0,296.89 L957.0,296.91 L958.0,296.93 L959.0,296.94 L960.0,296.96 L961.0,296.98 L962.0,296.99 L963.0,297.01 L964.0,297.03 L965.0,297.04 L966.0,297.06 L967.0,297.08 L968.0,297.09 L969.0,297.09 L970.0,297.03 L971.0,296.91 L972.0,296.72 L973.0,296.47 L974.0,296.17 L975.0,295.87 L976.0,295.57 L977.0,295.27 L978.0,295.00 L979.0,294.77 L980.0,294.58 L981.0,294.43 L982.0,294.31 L983.0,294.21 L984.0,294.10 L985.0,293.99 L986.0,293.89 L987.0,293.78 L988.0,293.67 L989.0,293.57 L990.0,293.46 L991.0,293.35 L992.0,293.25 L993.0,293.17 L994.0,293.10 L995.0,293.05 L996.0,293.01 L997.0,292.98 L998.0,292.94 L999.0,292.91 L1000.0,292.87 L1001.0,292.83 L1002.0,292.79 L1003.0,292.76 L1004.0,292.72 L1005.0,292.68 L1006.0,292.64 L1007.0,292.61 L1008.0,292.57 L1009.0,292.53 L1010.0,292.49 L1011.0,292.46 L1012.0,292.42 L1013.0,292.38 L1014.0,292.34 L1015.0,292.31 L1016.0,292.27 L1017.0,292.23 L1018.0,292.19 L1019.0,292.16 L1020.0,292.12 L1021.0,292.08 L1022.0,292.04 L1023.0,292.01 L1024.0,291.97 L1025.0,291.93 L1026.0,291.89 L1027.0,291.86 L1028.0,291.82 L1029.0,291.78 L1030.0,291.74 L1031.0,291.76 L1032.0,291.84 L1033.0,291.97 L1034.0,292.16 L1035.0,292.41 L1036.0,292.68 L1037.0,293.00 L1038.0,293.37 L1039.0,293.79 L1040.0,294.26 L1041.0,294.76 L1042.0,295.26 L1043.0,295.45 L1044.0,295.31 L1045.0,294.83 L1046.0,294.02 L1047.0,292.88 L1048.0,291.72 L1049.0,290.55 L1050.0,289.38 L1051.0,288.22 L1052.0,287.05 L1053.0,285.88 L1054.0,284.88 L1055.0,284.08 L1056.0,283.48 L1057.0,283.17 L1058.0,283.15 L1059.0,283.27 L1060.0,283.48 L1061.0,283.78 L1062.0,284.08 L1063.0,284.38 L1064.0,284.68 L1065.0,284.98 L1066.0,285.20 L1067.0,285.30 L1068.0,285.29 L1069.0,285.18 L1070.0,284.95 L1071.0,284.70 L1072.0,284.45 L1073.0,284.20 L1074.0,283.95 L1075.0,283.70 L1076.0,283.45 L1077.0,283.20 L1078.0,282.95 L1079.0,282.75 L1080.0,282.60 L1081.0,282.50 L1082.0,282.45 L1083.0,282.46 L1084.0,282.49 L1085.0,282.51 L1086.0,282.53 L1087.0,282.55 L1088.0,282.57 L1089.0,282.59 L1090.0,282.61 L1091.0,282.63 L1092.0,282.65 L1093.0,282.67 L1094.0,282.69 L1095.0,282.71 L1096.0,282.73 L1097.0,282.75 L1098.0,282.77 L1099.0,282.79 L1100.0,282.81 L1101.0,282.83 L1102.0,282.85 L1103.0,282.86 L1103.0,307.0 Z"/>
<path fill="#e93d83" d="M297.0,307.0 L297.0,288.75 L298.0,288.79 L299.0,288.83 L300.0,288.89 L301.0,288.95 L302.0,289.01 L303.0,289.07 L304.0,289.13 L305.0,289.18 L306.0,289.24 L307.0,289.30 L308.0,289.36 L309.0,289.42 L310.0,289.48 L311.0,289.54 L312.0,289.60 L313.0,289.66 L314.0,289.71 L315.0,289.77 L316.0,289.83 L317.0,289.84 L318.0,289.73 L319.0,289.50 L320.0,289.14 L321.0,288.67 L322.0,288.14 L323.0,287.60 L324.0,287.06 L325.0,286.52 L326.0,285.98 L327.0,285.44 L328.0,285.00 L329.0,284.76 L330.0,284.71 L331.0,284.87 L332.0,285.22 L333.0,285.68 L334.0,286.13 L335.0,286.59 L336.0,287.04 L337.0,287.45 L338.0,287.69 L339.0,287.74 L340.0,287.61 L341.0,287.30 L342.0,286.85 L343.0,286.40 L344.0,285.95 L345.0,285.50 L346.0,285.13 L347.0,284.88 L348.0,284.73 L349.0,284.68 L350.0,284.75 L351.0,284.83 L352.0,284.91 L353.0,285.00 L354.0,285.08 L355.0,285.16 L356.0,285.25 L357.0,285.33 L358.0,285.41 L359.0,285.50 L360.0,285.58 L361.0,285.65 L362.0,285.70 L363.0,285.72 L364.0,285.73 L365.0,285.71 L366.0,285.68 L367.0,285.66 L368.0,285.63 L369.0,285.61 L370.0,285.58 L371.0,285.56 L372.0,285.53 L373.0,285.51 L374.0,285.48 L375.0,285.46 L376.0,285.43 L377.0,285.41 L378.0,285.35 L379.0,285.24 L380.0,285.09 L381.0,284.89 L382.0,284.65 L383.0,284.55 L384.0,284.65 L385.0,284.94 L386.0,285.42 L387.0,286.11 L388.0,286.83 L389.0,287.56 L390.0,288.29 L391.0,289.01 L392.0,289.74 L393.0,290.47 L394.0,291.02 L395.0,291.40 L396.0,291.61 L397.0,291.65 L398.0,291.52 L399.0,291.39 L400.0,291.25 L401.0,291.17 L402.0,291.21 L403.0,291.37 L404.0,291.64 L405.0,292.04 L406.0,292.51 L407.0,292.97 L408.0,293.44 L409.0,293.82 L410.0,294.08 L411.0,294.24 L412.0,294.29 L413.0,294.23 L414.0,294.16 L415.0,294.08 L416.0,294.01 L417.0,293.93 L418.0,293.86 L419.0,293.80 L420.0,293.75 L421.0,293.73 L422.0,293.73 L423.0,293.75 L424.0,293.77 L425.0,293.79 L426.0,293.81 L427.0,293.83 L428.0,293.86 L429.0,293.88 L430.0,293.90 L431.0,293.92 L432.0,293.94 L433.0,293.96 L434.0,293.99 L435.0,294.01 L436.0,294.03 L437.0,294.05 L438.0,294.07 L439.0,294.10 L440.0,294.12 L441.0,294.14 L442.0,294.16 L443.0,294.18 L444.0,294.20 L445.0,294.23 L446.0,294.25 L447.0,294.27 L448.0,294.29 L449.0,294.31 L450.0,294.34 L451.0,294.36 L452.0,294.38 L453.0,294.40 L454.0,294.43 L455.0,294.48 L456.0,294.53 L457.0,294.60 L458.0,294.67 L459.0,294.75 L460.0,294.83 L461.0,294.90 L462.0,294.98 L463.0,295.06 L464.0,295.13 L465.0,295.21 L466.0,295.29 L467.0,295.36 L468.0,295.44 L469.0,295.52 L470.0,295.59 L471.0,295.67 L472.0,295.75 L473.0,295.82 L474.0,295.90 L475.0,295.98 L476.0,296.05 L477.0,296.13 L478.0,296.22 L479.0,296.31 L480.0,296.42 L481.0,296.54 L482.0,296.67 L483.0,296.80 L484.0,296.94 L485.0,297.07 L486.0,297.20 L487.0,297.34 L488.0,297.47 L489.0,297.60 L490.0,297.74 L491.0,297.87 L492.0,298.00 L493.0,298.22 L494.0,298.41 L495.0,298.57 L496.0,298.70 L497.0,298.80 L498.0,298.80 L499.0,298.79 L500.0,298.78 L501.0,298.77 L502.0,298.76 L503.0,298.75 L504.0,298.75 L505.0,298.74 L506.0,298.73 L507.0,298.72 L508.0,298.71 L509.0,298.70 L510.0,298.70 L511.0,298.69 L512.0,298.68 L513.0,298.67 L514.0,298.66 L515.0,298.65 L516.0,298.65 L517.0,298.64 L518.0,298.63 L519.0,298.62 L520.0,298.61 L521.0,298.60 L522.0,298.60 L523.0,298.59 L524.0,298.58 L525.0,298.57 L526.0,298.56 L527.0,298.55 L528.0,298.55 L529.0,298.54 L530.0,298.53 L531.0,298.52 L532.0,298.51 L533.0,298.50 L534.0,298.50 L535.0,298.49 L536.0,298.48 L537.0,298.47 L538.0,298.46 L539.0,298.45 L540.0,298.45 L541.0,298.44 L542.0,298.43 L543.0,298.42 L544.0,298.41 L545.0,298.40 L546.0,298.39 L547.0,298.38 L548.0,298.37 L549.0,298.36 L550.0,298.35 L551.0,298.34 L552.0,298.33 L553.0,298.32 L554.0,298.30 L555.0,298.29 L556.0,298.28 L557.0,298.27 L558.0,298.26 L559.0,298.25 L560.0,298.24 L561.0,298.22 L562.0,298.21 L563.0,298.20 L564.0,298.19 L565.0,298.18 L566.0,298.17 L567.0,298.16 L568.0,298.15 L569.0,298.13 L570.0,298.12 L571.0,298.11 L572.0,298.10 L573.0,298.09 L574.0,298.08 L575.0,298.07 L576.0,298.05 L577.0,298.04 L578.0,298.03 L579.0,298.02 L580.0,298.01 L581.0,297.97 L582.0,297.89 L583.0,297.75 L584.0,297.56 L585.0,297.32 L586.0,297.05 L587.0,296.77 L588.0,296.50 L589.0,296.23 L590.0,295.96 L591.0,295.69 L592.0,295.42 L593.0,295.15 L594.0,294.90 L595.0,294.65 L596.0,294.43 L597.0,294.21 L598.0,294.01 L599.0,293.81 L600.0,293.61 L601.0,293.41 L602.0,293.21 L603.0,293.01 L604.0,292.81 L605.0,292.61 L606.0,292.41 L607.0,292.21 L608.0,292.01 L609.0,291.81 L610.0,291.62 L611.0,291.47 L612.0,291.36 L613.0,291.29 L614.0,291.27 L615.0,291.28 L616.0,291.29 L617.0,291.30 L618.0,291.32 L619.0,291.33 L620.0,291.34 L621.0,291.35 L622.0,291.36 L623.0,291.37 L624.0,291.38 L625.0,291.40 L626.0,291.41 L627.0,291.42 L628.0,291.43 L629.0,291.44 L630.0,291.45 L631.0,291.46 L632.0,291.47 L633.0,291.49 L634.0,291.50 L635.0,291.51 L636.0,291.52 L637.0,291.53 L638.0,291.54 L639.0,291.55 L640.0,291.57 L641.0,291.58 L642.0,291.59 L643.0,291.60 L644.0,291.61 L645.0,291.62 L646.0,291.63 L647.0,291.65 L648.0,291.71 L649.0,291.81 L650.0,291.95 L651.0,292.13 L652.0,292.35 L653.0,292.57 L654.0,292.79 L655.0,293.01 L656.0,293.23 L657.0,293.44 L658.0,293.66 L659.0,293.88 L660.0,294.10 L661.0,294.30 L662.0,294.46 L663.0,294.59 L664.0,294.68 L665.0,294.75 L666.0,294.80 L667.0,294.85 L668.0,294.90 L669.0,294.95 L670.0,295.04 L671.0,295.16 L672.0,295.30 L673.0,295.48 L674.0,295.68 L675.0,295.88 L676.0,296.08 L677.0,296.28 L678.0,296.48 L679.0,296.68 L680.0,296.88 L681.0,297.08 L682.0,297.25 L683.0,297.38 L684.0,297.45 L685.0,297.48 L686.0,297.46 L687.0,297.43 L688.0,297.39 L689.0,297.36 L690.0,297.32 L691.0,297.28 L692.0,297.25 L693.0,297.29 L694.0,297.35 L695.0,297.43 L696.0,297.51 L697.0,297.61 L698.0,297.63 L699.0,297.66 L700.0,297.68 L701.0,297.71 L702.0,297.73 L703.0,297.76 L704.0,297.78 L705.0,297.81 L706.0,297.83 L707.0,297.86 L708.0,297.88 L709.0,297.91 L710.0,297.94 L711.0,297.98 L712.0,298.04 L713.0,298.11 L714.0,298.20 L715.0,298.30 L716.0,298.40 L717.0,298.50 L718.0,298.60 L719.0,298.69 L720.0,298.77 L721.0,298.84 L722.0,298.91 L723.0,298.96 L724.0,299.01 L725.0,299.06 L726.0,299.11 L727.0,299.16 L728.0,299.21 L729.0,299.26 L730.0,299.31 L731.0,299.36 L732.0,299.41 L733.0,299.46 L734.0,299.51 L735.0,299.56 L736.0,299.61 L737.0,299.66 L738.0,299.71 L739.0,299.76 L740.0,299.81 L741.0,299.86 L742.0,299.91 L743.0,299.96 L744.0,300.01 L745.0,300.06 L746.0,300.11 L747.0,300.16 L748.0,300.21 L749.0,300.26 L750.0,300.31 L751.0,300.36 L752.0,300.41 L753.0,300.44 L754.0,300.47 L755.0,300.47 L756.0,300.47 L757.0,300.45 L758.0,300.43 L759.0,300.41 L760.0,300.40 L761.0,300.38 L762.0,300.36 L763.0,300.34 L764.0,300.33 L765.0,300.31 L766.0,300.29 L767.0,300.27 L768.0,300.25 L769.0,300.24 L770.0,300.22 L771.0,300.20 L772.0,300.18 L773.0,300.16 L774.0,300.15 L775.0,300.13 L776.0,300.08 L777.0,299.97 L778.0,299.81 L779.0,299.58 L780.0,299.30 L781.0,298.99 L782.0,298.68 L783.0,298.36 L784.0,298.05 L785.0,297.74 L786.0,297.43 L787.0,297.11 L788.0,296.80 L789.0,296.49 L790.0,296.18 L791.0,295.86 L792.0,295.55 L793.0,295.24 L794.0,294.92 L795.0,294.59 L796.0,294.26 L797.0,293.91 L798.0,293.56 L799.0,293.21 L800.0,292.86 L801.0,292.51 L802.0,292.20 L803.0,291.96 L804.0,291.79 L805.0,291.68 L806.0,291.64 L807.0,291.63 L808.0,291.62 L809.0,291.61 L810.0,291.60 L811.0,291.59 L812.0,291.58 L813.0,291.57 L814.0,291.56 L815.0,291.55 L816.0,291.54 L817.0,291.53 L818.0,291.52 L819.0,291.51 L820.0,291.50 L821.0,291.49 L822.0,291.48 L823.0,291.47 L824.0,291.46 L825.0,291.45 L826.0,291.44 L827.0,291.43 L828.0,291.42 L829.0,291.41 L830.0,291.40 L831.0,291.39 L832.0,291.38 L833.0,291.37 L834.0,291.36 L835.0,291.35 L836.0,291.34 L837.0,291.33 L838.0,291.32 L839.0,291.31 L840.0,291.30 L841.0,291.29 L842.0,291.28 L843.0,291.27 L844.0,291.29 L845.0,291.38 L846.0,291.54 L847.0,291.75 L848.0,292.04 L849.0,292.36 L850.0,292.68 L851.0,292.99 L852.0,293.31 L853.0,293.63 L854.0,293.95 L855.0,294.27 L856.0,294.59 L857.0,294.90 L858.0,295.22 L859.0,295.54 L860.0,295.86 L861.0,296.18 L862.0,296.49 L863.0,296.76 L864.0,296.96 L865.0,297.10 L866.0,297.19 L867.0,297.22 L868.0,297.25 L869.0,297.27 L870.0,297.30 L871.0,297.33 L872.0,297.35 L873.0,297.38 L874.0,297.41 L875.0,297.44 L876.0,297.46 L877.0,297.49 L878.0,297.52 L879.0,297.55 L880.0,297.57 L881.0,297.60 L882.0,297.63 L883.0,297.65 L884.0,297.68 L885.0,297.71 L886.0,297.74 L887.0,297.76 L888.0,297.79 L889.0,297.82 L890.0,297.84 L891.0,297.87 L892.0,297.90 L893.0,297.93 L894.0,297.96 L895.0,297.99 L896.0,298.03 L897.0,298.08 L898.0,298.13 L899.0,298.18 L900.0,298.23 L901.0,298.28 L902.0,298.33 L903.0,298.38 L904.0,298.43 L905.0,298.48 L906.0,298.53 L907.0,298.58 L908.0,298.63 L909.0,298.68 L910.0,298.73 L911.0,298.78 L912.0,298.83 L913.0,298.88 L914.0,298.93 L915.0,298.98 L916.0,299.03 L917.0,299.08 L918.0,299.13 L919.0,299.18 L920.0,299.23 L921.0,299.28 L922.0,299.33 L923.0,299.38 L924.0,299.43 L925.0,299.48 L926.0,299.53 L927.0,299.57 L928.0,299.57 L929.0,299.54 L930.0,299.47 L931.0,299.37 L932.0,299.25 L933.0,299.12 L934.0,299.00 L935.0,298.87 L936.0,298.75 L937.0,298.62 L938.0,298.50 L939.0,298.37 L940.0,298.25 L941.0,298.12 L942.0,298.00 L943.0,297.87 L944.0,297.76 L945.0,297.68 L946.0,297.62 L947.0,297.60 L948.0,297.60 L949.0,297.62 L950.0,297.63 L951.0,297.65 L952.0,297.67 L953.0,297.68 L954.0,297.70 L955.0,297.72 L956.0,297.73 L957.0,297.75 L958.0,297.77 L959.0,297.78 L960.0,297.80 L961.0,297.82 L962.0,297.83 L963.0,297.85 L964.0,297.87 L965.0,297.88 L966.0,297.90 L967.0,297.92 L968.0,297.93 L969.0,297.94 L970.0,297.89 L971.0,297.79 L972.0,297.63 L973.0,297.42 L974.0,297.17 L975.0,296.92 L976.0,296.67 L977.0,296.42 L978.0,296.20 L979.0,296.01 L980.0,295.86 L981.0,295.74 L982.0,295.65 L983.0,295.57 L984.0,295.49 L985.0,295.41 L986.0,295.33 L987.0,295.25 L988.0,295.17 L989.0,295.09 L990.0,295.01 L991.0,294.93 L992.0,294.85 L993.0,294.83 L994.0,294.82 L995.0,294.82 L996.0,294.83 L997.0,294.86 L998.0,294.83 L999.0,294.81 L1000.0,294.78 L1001.0,294.76 L1002.0,294.73 L1003.0,294.71 L1004.0,294.68 L1005.0,294.66 L1006.0,294.63 L1007.0,294.61 L1008.0,294.58 L1009.0,294.56 L1010.0,294.53 L1011.0,294.51 L1012.0,294.48 L1013.0,294.46 L1014.0,294.43 L1015.0,294.41 L1016.0,294.38 L1017.0,294.36 L1018.0,294.33 L1019.0,294.31 L1020.0,294.28 L1021.0,294.26 L1022.0,294.23 L1023.0,294.21 L1024.0,294.18 L1025.0,294.16 L1026.0,294.13 L1027.0,294.11 L1028.0,294.08 L1029.0,294.06 L1030.0,294.03 L1031.0,294.06 L1032.0,294.14 L1033.0,294.28 L1034.0,294.47 L1035.0,294.72 L1036.0,294.99 L1037.0,295.31 L1038.0,295.68 L1039.0,296.10 L1040.0,296.57 L1041.0,297.07 L1042.0,297.57 L1043.0,297.78 L1044.0,297.67 L1045.0,297.24 L1046.0,296.50 L1047.0,295.44 L1048.0,294.36 L1049.0,293.27 L1050.0,292.19 L1051.0,291.11 L1052.0,290.02 L1053.0,288.94 L1054.0,288.03 L1055.0,287.34 L1056.0,286.87 L1057.0,286.68 L1058.0,286.77 L1059.0,286.96 L1060.0,287.21 L1061.0,287.52 L1062.0,287.84 L1063.0,288.15 L1064.0,288.42 L1065.0,288.63 L1066.0,288.77 L1067.0,288.84 L1068.0,288.86 L1069.0,288.84 L1070.0,288.83 L1071.0,288.82 L1072.0,288.81 L1073.0,288.79 L1074.0,288.78 L1075.0,288.77 L1076.0,288.76 L1077.0,288.75 L1078.0,288.73 L1079.0,288.72 L1080.0,288.71 L1081.0,288.70 L1082.0,288.68 L1083.0,288.67 L1084.0,288.66 L1085.0,288.65 L1086.0,288.63 L1087.0,288.62 L1088.0,288.61 L1089.0,288.60 L1090.0,288.58 L1091.0,288.57 L1092.0,288.56 L1093.0,288.55 L1094.0,288.54 L1095.0,288.52 L1096.0,288.51 L1097.0,288.50 L1098.0,288.49 L1099.0,288.47 L1100.0,288.46 L1101.0,288.45 L1102.0,288.44 L1103.0,288.43 L1103.0,307.0 Z"/>
<path fill="#ce3de9" d="M297.0,307.0 L297.0,292.99 L298.0,293.06 L299.0,293.15 L300.0,293.27 L301.0,293.39 L302.0,293.51 L303.0,293.62 L304.0,293.74 L305.0,293.86 L306.0,293.98 L307.0,294.09 L308.0,294.21 L309.0,294.33 L310.0,294.45 L311.0,294.56 L312.0,294.68 L313.0,294.80 L314.0,294.92 L315.0,295.03 L316.0,295.15 L317.0,295.20 L318.0,295.10 L319.0,294.84 L320.0,294.43 L321.0,293.87 L322.0,293.21 L323.0,292.56 L324.0,291.90 L325.0,291.25 L326.0,290.60 L327.0,289.94 L328.0,289.38 L329.0,289.02 L330.0,288.85 L331.0,288.87 L332.0,289.09 L333.0,289.41 L334.0,289.73 L335.0,290.05 L336.0,290.36 L337.0,290.65 L338.0,290.81 L339.0,290.83 L340.0,290.71 L341.0,290.47 L342.0,290.12 L343.0,289.77 L344.0,289.42 L345.0,289.07 L346.0,288.77 L347.0,288.55 L348.0,288.40 L349.0,288.31 L350.0,288.30 L351.0,288.30 L352.0,288.30 L353.0,288.30 L354.0,288.30 L355.0,288.30 L356.0,288.30 L357.0,288.30 L358.0,288.30 L359.0,288.30 L360.0,288.30 L361.0,288.30 L362.0,288.30 L363.0,288.30 L364.0,288.30 L365.0,288.30 L366.0,288.30 L367.0,288.30 L368.0,288.30 L369.0,288.30 L370.0,288.30 L371.0,288.30 L372.0,288.30 L373.0,288.30 L374.0,288.30 L375.0,288.30 L376.0,288.30 L377.0,288.30 L378.0,288.29 L379.0,288.26 L380.0,288.21 L381.0,288.14 L382.0,288.06 L383.0,288.10 L384.0,288.27 L385.0,288.60 L386.0,289.08 L387.0,289.70 L388.0,290.36 L389.0,291.01 L390.0,291.67 L391.0,292.32 L392.0,292.98 L393.0,293.64 L394.0,294.15 L395.0,294.52 L396.0,294.74 L397.0,294.82 L398.0,294.75 L399.0,294.68 L400.0,294.62 L401.0,294.59 L402.0,294.67 L403.0,294.84 L404.0,295.12 L405.0,295.49 L406.0,295.93 L407.0,296.36 L408.0,296.79 L409.0,297.16 L410.0,297.43 L411.0,297.62 L412.0,297.72 L413.0,297.74 L414.0,297.75 L415.0,297.75 L416.0,297.76 L417.0,297.77 L418.0,297.77 L419.0,297.78 L420.0,297.78 L421.0,297.79 L422.0,297.79 L423.0,297.80 L424.0,297.81 L425.0,297.81 L426.0,297.82 L427.0,297.82 L428.0,297.83 L429.0,297.83 L430.0,297.84 L431.0,297.84 L432.0,297.85 L433.0,297.86 L434.0,297.86 L435.0,297.87 L436.0,297.87 L437.0,297.88 L438.0,297.88 L439.0,297.89 L440.0,297.90 L441.0,297.90 L442.0,297.91 L443.0,297.91 L444.0,297.92 L445.0,297.92 L446.0,297.93 L447.0,297.93 L448.0,297.94 L449.0,297.95 L450.0,297.95 L451.0,297.96 L452.0,297.96 L453.0,297.97 L454.0,297.99 L455.0,298.04 L456.0,298.11 L457.0,298.19 L458.0,298.30 L459.0,298.41 L460.0,298.51 L461.0,298.62 L462.0,298.73 L463.0,298.83 L464.0,298.94 L465.0,299.05 L466.0,299.16 L467.0,299.26 L468.0,299.37 L469.0,299.47 L470.0,299.57 L471.0,299.66 L472.0,299.74 L473.0,299.81 L474.0,299.88 L475.0,299.95 L476.0,300.01 L477.0,300.08 L478.0,300.15 L479.0,300.21 L480.0,300.28 L481.0,300.35 L482.0,300.40 L483.0,300.45 L484.0,300.48 L485.0,300.50 L486.0,300.51 L487.0,300.51 L488.0,300.51 L489.0,300.51 L490.0,300.51 L491.0,300.51 L492.0,300.51 L493.0,300.51 L494.0,300.51 L495.0,300.51 L496.0,300.51 L497.0,300.51 L498.0,300.51 L499.0,300.51 L500.0,300.51 L501.0,300.51 L502.0,300.51 L503.0,300.51 L504.0,300.51 L505.0,300.51 L506.0,300.51 L507.0,300.51 L508.0,300.51 L509.0,300.51 L510.0,300.51 L511.0,300.51 L512.0,300.51 L513.0,300.51 L514.0,300.51 L515.0,300.51 L516.0,300.51 L517.0,300.51 L518.0,300.51 L519.0,300.51 L520.0,300.51 L521.0,300.51 L522.0,300.51 L523.0,300.51 L524.0,300.51 L525.0,300.52 L526.0,300.53 L527.0,300.54 L528.0,300.56 L529.0,300.57 L530.0,300.59 L531.0,300.60 L532.0,300.61 L533.0,300.63 L534.0,300.64 L535.0,300.66 L536.0,300.67 L537.0,300.69 L538.0,300.70 L539.0,300.72 L540.0,300.73 L541.0,300.74 L542.0,300.76 L543.0,300.77 L544.0,300.79 L545.0,300.80 L546.0,300.82 L547.0,300.83 L548.0,300.85 L549.0,300.86 L550.0,300.88 L551.0,300.89 L552.0,300.90 L553.0,300.92 L554.0,300.93 L555.0,300.95 L556.0,300.96 L557.0,300.98 L558.0,300.99 L559.0,301.01 L560.0,301.02 L561.0,301.03 L562.0,301.05 L563.0,301.06 L564.0,301.08 L565.0,301.09 L566.0,301.11 L567.0,301.12 L568.0,301.14 L569.0,301.15 L570.0,301.17 L571.0,301.18 L572.0,301.19 L573.0,301.21 L574.0,301.22 L575.0,301.24 L576.0,301.25 L577.0,301.27 L578.0,301.28 L579.0,301.30 L580.0,301.31 L581.0,301.29 L582.0,301.19 L583.0,301.02 L584.0,300.76 L585.0,300.43 L586.0,300.06 L587.0,299.69 L588.0,299.32 L589.0,298.95 L590.0,298.58 L591.0,298.20 L592.0,297.83 L593.0,297.46 L594.0,297.13 L595.0,296.84 L596.0,296.59 L597.0,296.38 L598.0,296.22 L599.0,296.08 L600.0,295.98 L601.0,295.91 L602.0,295.88 L603.0,295.88 L604.0,295.88 L605.0,295.88 L606.0,295.88 L607.0,295.88 L608.0,295.88 L609.0,295.88 L610.0,295.88 L611.0,295.88 L612.0,295.88 L613.0,295.88 L614.0,295.88 L615.0,295.88 L616.0,295.88 L617.0,295.88 L618.0,295.88 L619.0,295.88 L620.0,295.88 L621.0,295.88 L622.0,295.88 L623.0,295.88 L624.0,295.88 L625.0,295.88 L626.0,295.88 L627.0,295.88 L628.0,295.88 L629.0,295.88 L630.0,295.88 L631.0,295.88 L632.0,295.88 L633.0,295.88 L634.0,295.88 L635.0,295.88 L636.0,295.88 L637.0,295.88 L638.0,295.88 L639.0,295.88 L640.0,295.88 L641.0,295.88 L642.0,295.88 L643.0,295.88 L644.0,295.88 L645.0,295.88 L646.0,295.88 L647.0,295.88 L648.0,295.95 L649.0,296.07 L650.0,296.24 L651.0,296.47 L652.0,296.76 L653.0,297.04 L654.0,297.32 L655.0,297.60 L656.0,297.88 L657.0,298.16 L658.0,298.44 L659.0,298.72 L660.0,299.01 L661.0,299.25 L662.0,299.43 L663.0,299.56 L664.0,299.62 L665.0,299.63 L666.0,299.62 L667.0,299.60 L668.0,299.59 L669.0,299.58 L670.0,299.56 L671.0,299.55 L672.0,299.54 L673.0,299.53 L674.0,299.51 L675.0,299.50 L676.0,299.49 L677.0,299.47 L678.0,299.46 L679.0,299.45 L680.0,299.44 L681.0,299.42 L682.0,299.41 L683.0,299.40 L684.0,299.38 L685.0,299.37 L686.0,299.36 L687.0,299.35 L688.0,299.33 L689.0,299.32 L690.0,299.31 L691.0,299.29 L692.0,299.28 L693.0,299.27 L694.0,299.26 L695.0,299.27 L696.0,299.28 L697.0,299.29 L698.0,299.32 L699.0,299.34 L700.0,299.37 L701.0,299.39 L702.0,299.42 L703.0,299.44 L704.0,299.47 L705.0,299.49 L706.0,299.52 L707.0,299.54 L708.0,299.57 L709.0,299.59 L710.0,299.62 L711.0,299.69 L712.0,299.79 L713.0,299.93 L714.0,300.10 L715.0,300.30 L716.0,300.50 L717.0,300.70 L718.0,300.90 L719.0,301.07 L720.0,301.20 L721.0,301.29 L722.0,301.35 L723.0,301.37 L724.0,301.37 L725.0,301.38 L726.0,301.39 L727.0,301.40 L728.0,301.40 L729.0,301.41 L730.0,301.42 L731.0,301.43 L732.0,301.43 L733.0,301.44 L734.0,301.45 L735.0,301.46 L736.0,301.46 L737.0,301.47 L738.0,301.48 L739.0,301.48 L740.0,301.49 L741.0,301.50 L742.0,301.51 L743.0,301.51 L744.0,301.52 L745.0,301.53 L746.0,301.54 L747.0,301.54 L748.0,301.55 L749.0,301.56 L750.0,301.57 L751.0,301.57 L752.0,301.58 L753.0,301.59 L754.0,301.59 L755.0,301.60 L756.0,301.61 L757.0,301.62 L758.0,301.62 L759.0,301.63 L760.0,301.64 L761.0,301.65 L762.0,301.65 L763.0,301.66 L764.0,301.67 L765.0,301.68 L766.0,301.68 L767.0,301.69 L768.0,301.70 L769.0,301.71 L770.0,301.71 L771.0,301.72 L772.0,301.73 L773.0,301.73 L774.0,301.74 L775.0,301.75 L776.0,301.73 L777.0,301.64 L778.0,301.50 L779.0,301.30 L780.0,301.04 L781.0,300.76 L782.0,300.47 L783.0,300.18 L784.0,299.89 L785.0,299.60 L786.0,299.31 L787.0,299.02 L788.0,298.74 L789.0,298.45 L790.0,298.16 L791.0,297.87 L792.0,297.58 L793.0,297.29 L794.0,297.00 L795.0,296.71 L796.0,296.41 L797.0,296.12 L798.0,295.82 L799.0,295.52 L800.0,295.22 L801.0,294.92 L802.0,294.65 L803.0,294.45 L804.0,294.31 L805.0,294.23 L806.0,294.22 L807.0,294.23 L808.0,294.24 L809.0,294.25 L810.0,294.26 L811.0,294.27 L812.0,294.28 L813.0,294.29 L814.0,294.30 L815.0,294.31 L816.0,294.32 L817.0,294.33 L818.0,294.34 L819.0,294.35 L820.0,294.36 L821.0,294.37 L822.0,294.38 L823.0,294.39 L824.0,294.40 L825.0,294.41 L826.0,294.42 L827.0,294.43 L828.0,294.44 L829.0,294.45 L830.0,294.46 L831.0,294.47 L832.0,294.48 L833.0,294.49 L834.0,294.50 L835.0,294.51 L836.0,294.52 L837.0,294.53 L838.0,294.54 L839.0,294.55 L840.0,294.56 L841.0,294.57 L842.0,294.58 L843.0,294.59 L844.0,294.63 L845.0,294.73 L846.0,294.89 L847.0,295.12 L848.0,295.41 L849.0,295.72 L850.0,296.04 L851.0,296.36 L852.0,296.68 L853.0,297.00 L854.0,297.32 L855.0,297.63 L856.0,297.95 L857.0,298.27 L858.0,298.59 L859.0,298.91 L860.0,299.22 L861.0,299.54 L862.0,299.86 L863.0,300.11 L864.0,300.29 L865.0,300.41 L866.0,300.45 L867.0,300.42 L868.0,300.40 L869.0,300.37 L870.0,300.34 L871.0,300.32 L872.0,300.29 L873.0,300.26 L874.0,300.23 L875.0,300.21 L876.0,300.18 L877.0,300.15 L878.0,300.13 L879.0,300.10 L880.0,300.07 L881.0,300.04 L882.0,300.02 L883.0,299.99 L884.0,299.96 L885.0,299.94 L886.0,299.91 L887.0,299.88 L888.0,299.85 L889.0,299.83 L890.0,299.80 L891.0,299.77 L892.0,299.74 L893.0,299.72 L894.0,299.70 L895.0,299.70 L896.0,299.71 L897.0,299.73 L898.0,299.76 L899.0,299.80 L900.0,299.83 L901.0,299.86 L902.0,299.90 L903.0,299.93 L904.0,299.96 L905.0,300.00 L906.0,300.03 L907.0,300.07 L908.0,300.12 L909.0,300.17 L910.0,300.23 L911.0,300.29 L912.0,300.35 L913.0,300.41 L914.0,300.47 L915.0,300.53 L916.0,300.59 L917.0,300.65 L918.0,300.71 L919.0,300.77 L920.0,300.83 L921.0,300.89 L922.0,300.95 L923.0,301.01 L924.0,301.07 L925.0,301.13 L926.0,301.19 L927.0,301.24 L928.0,301.29 L929.0,301.33 L930.0,301.35 L931.0,301.37 L932.0,301.38 L933.0,301.39 L934.0,301.40 L935.0,301.41 L936.0,301.42 L937.0,301.43 L938.0,301.44 L939.0,301.45 L940.0,301.46 L941.0,301.47 L942.0,301.48 L943.0,301.49 L944.0,301.50 L945.0,301.51 L946.0,301.52 L947.0,301.53 L948.0,301.54 L949.0,301.55 L950.0,301.56 L951.0,301.57 L952.0,301.58 L953.0,301.59 L954.0,301.60 L955.0,301.61 L956.0,301.62 L957.0,301.63 L958.0,301.64 L959.0,301.65 L960.0,301.66 L961.0,301.67 L962.0,301.68 L963.0,301.69 L964.0,301.70 L965.0,301.71 L966.0,301.72 L967.0,301.73 L968.0,301.74 L969.0,301.73 L970.0,301.65 L971.0,301.50 L972.0,301.28 L973.0,300.98 L974.0,300.63 L975.0,300.28 L976.0,299.93 L977.0,299.58 L978.0,299.27 L979.0,299.01 L980.0,298.80 L981.0,298.64 L982.0,298.52 L983.0,298.41 L984.0,298.31 L985.0,298.20 L986.0,298.10 L987.0,297.99 L988.0,297.88 L989.0,297.78 L990.0,297.67 L991.0,297.56 L992.0,297.46 L993.0,297.37 L994.0,297.29 L995.0,297.24 L996.0,297.20 L997.0,297.17 L998.0,297.15 L999.0,297.12 L1000.0,297.10 L1001.0,297.07 L1002.0,297.05 L1003.0,297.02 L1004.0,297.00 L1005.0,296.97 L1006.0,296.95 L1007.0,296.92 L1008.0,296.90 L1009.0,296.87 L1010.0,296.85 L1011.0,296.82 L1012.0,296.80 L1013.0,296.77 L1014.0,296.75 L1015.0,296.72 L1016.0,296.70 L1017.0,296.67 L1018.0,296.65 L1019.0,296.62 L1020.0,296.60 L1021.0,296.57 L1022.0,296.55 L1023.0,296.52 L1024.0,296.50 L1025.0,296.47 L1026.0,296.45 L1027.0,296.42 L1028.0,296.40 L1029.0,296.37 L1030.0,296.35 L1031.0,296.38 L1032.0,296.46 L1033.0,296.60 L1034.0,296.79 L1035.0,297.04 L1036.0,297.31 L1037.0,297.63 L1038.0,298.00 L1039.0,298.42 L1040.0,298.89 L1041.0,299.39 L1042.0,299.89 L1043.0,300.10 L1044.0,300.01 L1045.0,299.61 L1046.0,298.90 L1047.0,297.88 L1048.0,296.84 L1049.0,295.79 L1050.0,294.75 L1051.0,293.71 L1052.0,292.67 L1053.0,291.63 L1054.0,290.73 L1055.0,290.00 L1056.0,289.46 L1057.0,289.17 L1058.0,289.14 L1059.0,289.23 L1060.0,289.40 L1061.0,289.65 L1062.0,289.90 L1063.0,290.15 L1064.0,290.37 L1065.0,290.54 L1066.0,290.65 L1067.0,290.72 L1068.0,290.74 L1069.0,290.74 L1070.0,290.74 L1071.0,290.74 L1072.0,290.74 L1073.0,290.74 L1074.0,290.74 L1075.0,290.74 L1076.0,290.74 L1077.0,290.74 L1078.0,290.74 L1079.0,290.74 L1080.0,290.74 L1081.0,290.74 L1082.0,290.74 L1083.0,290.74 L1084.0,290.74 L1085.0,290.74 L1086.0,290.74 L1087.0,290.74 L1088.0,290.74 L1089.0,290.74 L1090.0,290.74 L1091.0,290.74 L1092.0,290.74 L1093.0,290.74 L1094.0,290.74 L1095.0,290.74 L1096.0,290.74 L1097.0,290.74 L1098.0,290.74 L1099.0,290.74 L1100.0,290.74 L1101.0,290.74 L1102.0,290.74 L1103.0,290.74 L1103.0,307.0 Z"/>
<path fill="#4d3de9" d="M297.0,307.0 L297.0,296.15 L298.0,296.18 L299.0,296.22 L300.0,296.26 L301.0,296.31 L302.0,296.36 L303.0,296.41 L304.0,296.45 L305.0,296.50 L306.0,296.55 L307.0,296.59 L308.0,296.64 L309.0,296.69 L310.0,296.73 L311.0,296.78 L312.0,296.83 L313.0,296.88 L314.0,296.92 L315.0,296.97 L316.0,297.02 L317.0,297.01 L318.0,296.89 L319.0,296.66 L320.0,296.30 L321.0,295.83 L322.0,295.29 L323.0,294.75 L324.0,294.21 L325.0,293.68 L326.0,293.14 L327.0,292.60 L328.0,292.16 L329.0,291.91 L330.0,291.87 L331.0,292.02 L332.0,292.38 L333.0,292.83 L334.0,293.29 L335.0,293.74 L336.0,294.19 L337.0,294.63 L338.0,294.97 L339.0,295.22 L340.0,295.38 L341.0,295.45 L342.0,295.45 L343.0,295.45 L344.0,295.45 L345.0,295.45 L346.0,295.45 L347.0,295.45 L348.0,295.45 L349.0,295.45 L350.0,295.45 L351.0,295.45 L352.0,295.45 L353.0,295.45 L354.0,295.45 L355.0,295.45 L356.0,295.45 L357.0,295.45 L358.0,295.45 L359.0,295.45 L360.0,295.45 L361.0,295.45 L362.0,295.45 L363.0,295.45 L364.0,295.45 L365.0,295.45 L366.0,295.45 L367.0,295.45 L368.0,295.45 L369.0,295.45 L370.0,295.45 L371.0,295.45 L372.0,295.45 L373.0,295.45 L374.0,295.45 L375.0,295.45 L376.0,295.45 L377.0,295.45 L378.0,295.43 L379.0,295.37 L380.0,295.27 L381.0,295.14 L382.0,294.98 L383.0,294.95 L384.0,295.07 L385.0,295.37 L386.0,295.83 L387.0,296.46 L388.0,297.12 L389.0,297.78 L390.0,298.45 L391.0,299.11 L392.0,299.78 L393.0,300.44 L394.0,301.00 L395.0,301.47 L396.0,301.83 L397.0,302.00 L398.0,301.96 L399.0,301.82 L400.0,301.60 L401.0,301.35 L402.0,301.17 L403.0,301.06 L404.0,301.02 L405.0,301.03 L406.0,301.03 L407.0,301.04 L408.0,301.04 L409.0,301.05 L410.0,301.05 L411.0,301.05 L412.0,301.06 L413.0,301.06 L414.0,301.07 L415.0,301.07 L416.0,301.08 L417.0,301.08 L418.0,301.09 L419.0,301.09 L420.0,301.10 L421.0,301.10 L422.0,301.11 L423.0,301.11 L424.0,301.12 L425.0,301.12 L426.0,301.13 L427.0,301.13 L428.0,301.14 L429.0,301.14 L430.0,301.14 L431.0,301.15 L432.0,301.15 L433.0,301.16 L434.0,301.16 L435.0,301.17 L436.0,301.17 L437.0,301.18 L438.0,301.18 L439.0,301.19 L440.0,301.19 L441.0,301.20 L442.0,301.20 L443.0,301.21 L444.0,301.21 L445.0,301.22 L446.0,301.22 L447.0,301.22 L448.0,301.23 L449.0,301.23 L450.0,301.24 L451.0,301.24 L452.0,301.25 L453.0,301.25 L454.0,301.29 L455.0,301.36 L456.0,301.46 L457.0,301.59 L458.0,301.75 L459.0,301.91 L460.0,302.03 L461.0,302.11 L462.0,302.17 L463.0,302.19 L464.0,302.19 L465.0,302.19 L466.0,302.19 L467.0,302.19 L468.0,302.19 L469.0,302.19 L470.0,302.19 L471.0,302.19 L472.0,302.19 L473.0,302.19 L474.0,302.19 L475.0,302.19 L476.0,302.19 L477.0,302.19 L478.0,302.19 L479.0,302.19 L480.0,302.19 L481.0,302.19 L482.0,302.19 L483.0,302.19 L484.0,302.19 L485.0,302.19 L486.0,302.19 L487.0,302.19 L488.0,302.19 L489.0,302.19 L490.0,302.19 L491.0,302.19 L492.0,302.19 L493.0,302.27 L494.0,302.35 L495.0,302.43 L496.0,302.51 L497.0,302.58 L498.0,302.57 L499.0,302.55 L500.0,302.54 L501.0,302.52 L502.0,302.51 L503.0,302.50 L504.0,302.48 L505.0,302.47 L506.0,302.45 L507.0,302.44 L508.0,302.42 L509.0,302.41 L510.0,302.40 L511.0,302.38 L512.0,302.37 L513.0,302.35 L514.0,302.34 L515.0,302.32 L516.0,302.31 L517.0,302.30 L518.0,302.28 L519.0,302.27 L520.0,302.25 L521.0,302.24 L522.0,302.22 L523.0,302.22 L524.0,302.24 L525.0,302.29 L526.0,302.35 L527.0,302.44 L528.0,302.54 L529.0,302.64 L530.0,302.74 L531.0,302.84 L532.0,302.92 L533.0,302.98 L534.0,303.01 L535.0,303.03 L536.0,303.03 L537.0,303.03 L538.0,303.03 L539.0,303.03 L540.0,303.03 L541.0,303.03 L542.0,303.03 L543.0,303.03 L544.0,303.03 L545.0,303.03 L546.0,303.03 L547.0,303.03 L548.0,303.03 L549.0,303.03 L550.0,303.03 L551.0,303.03 L552.0,303.03 L553.0,303.03 L554.0,303.03 L555.0,303.03 L556.0,303.03 L557.0,303.03 L558.0,303.03 L559.0,303.03 L560.0,303.03 L561.0,303.03 L562.0,303.03 L563.0,303.03 L564.0,303.03 L565.0,303.03 L566.0,303.03 L567.0,303.03 L568.0,303.03 L569.0,303.03 L570.0,303.03 L571.0,303.03 L572.0,303.03 L573.0,303.03 L574.0,303.03 L575.0,303.03 L576.0,303.03 L577.0,303.03 L578.0,303.03 L579.0,303.03 L580.0,303.03 L581.0,303.00 L582.0,302.90 L583.0,302.73 L584.0,302.50 L585.0,302.20 L586.0,301.86 L587.0,301.52 L588.0,301.19 L589.0,300.85 L590.0,300.51 L591.0,300.17 L592.0,299.84 L593.0,299.50 L594.0,299.19 L595.0,298.92 L596.0,298.69 L597.0,298.49 L598.0,298.32 L599.0,298.19 L600.0,298.09 L601.0,298.03 L602.0,298.00 L603.0,298.01 L604.0,298.02 L605.0,298.02 L606.0,298.03 L607.0,298.04 L608.0,298.05 L609.0,298.06 L610.0,298.07 L611.0,298.08 L612.0,298.09 L613.0,298.10 L614.0,298.10 L615.0,298.11 L616.0,298.12 L617.0,298.13 L618.0,298.14 L619.0,298.15 L620.0,298.16 L621.0,298.17 L622.0,298.18 L623.0,298.18 L624.0,298.19 L625.0,298.20 L626.0,298.21 L627.0,298.22 L628.0,298.23 L629.0,298.24 L630.0,298.25 L631.0,298.26 L632.0,298.27 L633.0,298.27 L634.0,298.28 L635.0,298.29 L636.0,298.30 L637.0,298.31 L638.0,298.32 L639.0,298.33 L640.0,298.34 L641.0,298.35 L642.0,298.35 L643.0,298.36 L644.0,298.37 L645.0,298.38 L646.0,298.42 L647.0,298.50 L648.0,298.61 L649.0,298.76 L650.0,298.95 L651.0,299.14 L652.0,299.34 L653.0,299.53 L654.0,299.73 L655.0,299.92 L656.0,300.11 L657.0,300.31 L658.0,300.50 L659.0,300.70 L660.0,300.89 L661.0,301.06 L662.0,301.19 L663.0,301.28 L664.0,301.33 L665.0,301.35 L666.0,301.35 L667.0,301.35 L668.0,301.35 L669.0,301.35 L670.0,301.35 L671.0,301.35 L672.0,301.35 L673.0,301.35 L674.0,301.35 L675.0,301.35 L676.0,301.35 L677.0,301.35 L678.0,301.35 L679.0,301.35 L680.0,301.35 L681.0,301.35 L682.0,301.35 L683.0,301.35 L684.0,301.35 L685.0,301.35 L686.0,301.35 L687.0,301.35 L688.0,301.35 L689.0,301.35 L690.0,301.35 L691.0,301.35 L692.0,301.35 L693.0,301.35 L694.0,301.35 L695.0,301.35 L696.0,301.35 L697.0,301.35 L698.0,301.35 L699.0,301.35 L700.0,301.35 L701.0,301.35 L702.0,301.35 L703.0,301.35 L704.0,301.35 L705.0,301.35 L706.0,301.35 L707.0,301.35 L708.0,301.35 L709.0,301.35 L710.0,301.36 L711.0,301.41 L712.0,301.52 L713.0,301.68 L714.0,301.89 L715.0,302.14 L716.0,302.39 L717.0,302.64 L718.0,302.89 L719.0,303.10 L720.0,303.26 L721.0,303.38 L722.0,303.44 L723.0,303.45 L724.0,303.45 L725.0,303.45 L726.0,303.45 L727.0,303.45 L728.0,303.45 L729.0,303.45 L730.0,303.45 L731.0,303.45 L732.0,303.45 L733.0,303.45 L734.0,303.45 L735.0,303.45 L736.0,303.45 L737.0,303.45 L738.0,303.45 L739.0,303.45 L740.0,303.45 L741.0,303.45 L742.0,303.45 L743.0,303.45 L744.0,303.45 L745.0,303.45 L746.0,303.45 L747.0,303.45 L748.0,303.45 L749.0,303.45 L750.0,303.45 L751.0,303.45 L752.0,303.45 L753.0,303.45 L754.0,303.45 L755.0,303.45 L756.0,303.45 L757.0,303.45 L758.0,303.45 L759.0,303.45 L760.0,303.45 L761.0,303.45 L762.0,303.45 L763.0,303.45 L764.0,303.45 L765.0,303.45 L766.0,303.45 L767.0,303.45 L768.0,303.45 L769.0,303.45 L770.0,303.45 L771.0,303.45 L772.0,303.45 L773.0,303.45 L774.0,303.45 L775.0,303.45 L776.0,303.42 L777.0,303.31 L778.0,303.13 L779.0,302.89 L780.0,302.57 L781.0,302.22 L782.0,301.87 L783.0,301.52 L784.0,301.17 L785.0,300.84 L786.0,300.52 L787.0,300.22 L788.0,299.92 L789.0,299.65 L790.0,299.37 L791.0,299.09 L792.0,298.81 L793.0,298.62 L794.0,298.48 L795.0,298.40 L796.0,298.38 L797.0,298.42 L798.0,298.43 L799.0,298.44 L800.0,298.45 L801.0,298.45 L802.0,298.46 L803.0,298.47 L804.0,298.48 L805.0,298.49 L806.0,298.50 L807.0,298.51 L808.0,298.52 L809.0,298.53 L810.0,298.53 L811.0,298.54 L812.0,298.55 L813.0,298.56 L814.0,298.57 L815.0,298.58 L816.0,298.59 L817.0,298.60 L818.0,298.61 L819.0,298.61 L820.0,298.62 L821.0,298.63 L822.0,298.64 L823.0,298.65 L824.0,298.66 L825.0,298.67 L826.0,298.68 L827.0,298.69 L828.0,298.70 L829.0,298.70 L830.0,298.71 L831.0,298.72 L832.0,298.73 L833.0,298.74 L834.0,298.75 L835.0,298.76 L836.0,298.77 L837.0,298.78 L838.0,298.78 L839.0,298.79 L840.0,298.80 L841.0,298.85 L842.0,298.93 L843.0,299.06 L844.0,299.23 L845.0,299.45 L846.0,299.67 L847.0,299.89 L848.0,300.10 L849.0,300.32 L850.0,300.54 L851.0,300.76 L852.0,300.98 L853.0,301.20 L854.0,301.40 L855.0,301.56 L856.0,301.67 L857.0,301.74 L858.0,301.77 L859.0,301.77 L860.0,301.77 L861.0,301.77 L862.0,301.77 L863.0,301.77 L864.0,301.77 L865.0,301.77 L866.0,301.77 L867.0,301.77 L868.0,301.77 L869.0,301.77 L870.0,301.77 L871.0,301.77 L872.0,301.77 L873.0,301.77 L874.0,301.77 L875.0,301.77 L876.0,301.77 L877.0,301.77 L878.0,301.77 L879.0,301.77 L880.0,301.77 L881.0,301.77 L882.0,301.77 L883.0,301.77 L884.0,301.77 L885.0,301.77 L886.0,301.77 L887.0,301.77 L888.0,301.77 L889.0,301.77 L890.0,301.77 L891.0,301.77 L892.0,301.77 L893.0,301.77 L894.0,301.77 L895.0,301.79 L896.0,301.81 L897.0,301.83 L898.0,301.87 L899.0,301.90 L900.0,301.93 L901.0,301.97 L902.0,302.00 L903.0,302.03 L904.0,302.07 L905.0,302.10 L906.0,302.14 L907.0,302.18 L908.0,302.22 L909.0,302.27 L910.0,302.33 L911.0,302.39 L912.0,302.45 L913.0,302.51 L914.0,302.57 L915.0,302.63 L916.0,302.69 L917.0,302.75 L918.0,302.81 L919.0,302.87 L920.0,302.93 L921.0,302.99 L922.0,303.05 L923.0,303.11 L924.0,303.17 L925.0,303.23 L926.0,303.29 L927.0,303.35 L928.0,303.39 L929.0,303.43 L930.0,303.46 L931.0,303.47 L932.0,303.48 L933.0,303.49 L934.0,303.50 L935.0,303.51 L936.0,303.52 L937.0,303.53 L938.0,303.54 L939.0,303.55 L940.0,303.56 L941.0,303.57 L942.0,303.58 L943.0,303.59 L944.0,303.60 L945.0,303.61 L946.0,303.62 L947.0,303.63 L948.0,303.64 L949.0,303.65 L950.0,303.66 L951.0,303.67 L952.0,303.68 L953.0,303.69 L954.0,303.70 L955.0,303.71 L956.0,303.72 L957.0,303.73 L958.0,303.74 L959.0,303.75 L960.0,303.76 L961.0,303.77 L962.0,303.78 L963.0,303.79 L964.0,303.80 L965.0,303.81 L966.0,303.82 L967.0,303.83 L968.0,303.84 L969.0,303.83 L970.0,303.74 L971.0,303.57 L972.0,303.31 L973.0,302.98 L974.0,302.58 L975.0,302.18 L976.0,301.78 L977.0,301.38 L978.0,301.03 L979.0,300.75 L980.0,300.55 L981.0,300.41 L982.0,300.33 L983.0,300.27 L984.0,300.21 L985.0,300.15 L986.0,300.09 L987.0,300.03 L988.0,299.97 L989.0,299.90 L990.0,299.84 L991.0,299.78 L992.0,299.72 L993.0,299.68 L994.0,299.66 L995.0,299.64 L996.0,299.63 L997.0,299.63 L998.0,299.62 L999.0,299.60 L1000.0,299.58 L1001.0,299.57 L1002.0,299.55 L1003.0,299.54 L1004.0,299.52 L1005.0,299.50 L1006.0,299.49 L1007.0,299.47 L1008.0,299.46 L1009.0,299.44 L1010.0,299.42 L1011.0,299.41 L1012.0,299.39 L1013.0,299.38 L1014.0,299.36 L1015.0,299.35 L1016.0,299.33 L1017.0,299.31 L1018.0,299.30 L1019.0,299.28 L1020.0,299.27 L1021.0,299.25 L1022.0,299.23 L1023.0,299.22 L1024.0,299.20 L1025.0,299.19 L1026.0,299.17 L1027.0,299.15 L1028.0,299.14 L1029.0,299.12 L1030.0,299.11 L1031.0,299.14 L1032.0,299.23 L1033.0,299.37 L1034.0,299.57 L1035.0,299.81 L1036.0,300.08 L1037.0,300.38 L1038.0,300.72 L1039.0,301.09 L1040.0,301.49 L1041.0,301.92 L1042.0,302.35 L1043.0,302.67 L1044.0,302.87 L1045.0,302.91 L1046.0,302.58 L1047.0,301.87 L1048.0,300.90 L1049.0,299.67 L1050.0,298.23 L1051.0,296.79 L1052.0,295.34 L1053.0,293.90 L1054.0,292.66 L1055.0,291.68 L1056.0,290.96 L1057.0,290.56 L1058.0,290.49 L1059.0,290.54 L1060.0,290.66 L1061.0,290.85 L1062.0,291.03 L1063.0,291.22 L1064.0,291.38 L1065.0,291.51 L1066.0,291.59 L1067.0,291.63 L1068.0,291.63 L1069.0,291.62 L1070.0,291.61 L1071.0,291.60 L1072.0,291.58 L1073.0,291.57 L1074.0,291.56 L1075.0,291.55 L1076.0,291.54 L1077.0,291.52 L1078.0,291.51 L1079.0,291.50 L1080.0,291.49 L1081.0,291.47 L1082.0,291.46 L1083.0,291.45 L1084.0,291.44 L1085.0,291.42 L1086.0,291.41 L1087.0,291.40 L1088.0,291.39 L1089.0,291.37 L1090.0,291.36 L1091.0,291.35 L1092.0,291.34 L1093.0,291.33 L1094.0,291.31 L1095.0,291.30 L1096.0,291.29 L1097.0,291.28 L1098.0,291.26 L1099.0,291.25 L1100.0,291.24 L1101.0,291.23 L1102.0,291.22 L1103.0,291.21 L1103.0,307.0 Z"/>
<path fill="#3daee9" d="M297.0,307.0 L297.0,302.20 L298.0,302.21 L299.0,302.23 L300.0,302.25 L301.0,302.26 L302.0,302.28 L303.0,302.30 L304.0,302.32 L305.0,302.34 L306.0,302.36 L307.0,302.38 L308.0,302.40 L309.0,302.42 L310.0,302.44 L311.0,302.46 L312.0,302.48 L313.0,302.50 L314.0,302.52 L315.0,302.54 L316.0,302.56 L317.0,302.53 L318.0,302.39 L319.0,302.14 L320.0,301.78 L321.0,301.30 L322.0,300.76 L323.0,300.22 L324.0,299.69 L325.0,299.15 L326.0,298.61 L327.0,298.07 L328.0,297.59 L329.0,297.22 L330.0,296.98 L331.0,296.84 L332.0,296.83 L333.0,296.88 L334.0,296.92 L335.0,296.97 L336.0,297.01 L337.0,297.05 L338.0,297.08 L339.0,297.09 L340.0,297.09 L341.0,297.08 L342.0,297.05 L343.0,297.02 L344.0,296.99 L345.0,296.97 L346.0,296.94 L347.0,296.91 L348.0,296.88 L349.0,296.85 L350.0,296.83 L351.0,296.80 L352.0,296.77 L353.0,296.75 L354.0,296.73 L355.0,296.72 L356.0,296.72 L357.0,296.72 L358.0,296.72 L359.0,296.72 L360.0,296.72 L361.0,296.72 L362.0,296.72 L363.0,296.72 L364.0,296.72 L365.0,296.72 L366.0,296.72 L367.0,296.72 L368.0,296.72 L369.0,296.72 L370.0,296.72 L371.0,296.72 L372.0,296.72 L373.0,296.72 L374.0,296.72 L375.0,296.72 L376.0,296.72 L377.0,296.72 L378.0,296.69 L379.0,296.63 L380.0,296.53 L381.0,296.41 L382.0,296.25 L383.0,296.22 L384.0,296.37 L385.0,296.71 L386.0,297.22 L387.0,297.91 L388.0,298.65 L389.0,299.38 L390.0,300.12 L391.0,300.85 L392.0,301.58 L393.0,302.32 L394.0,302.92 L395.0,303.40 L396.0,303.74 L397.0,303.90 L398.0,303.86 L399.0,303.77 L400.0,303.64 L401.0,303.48 L402.0,303.37 L403.0,303.31 L404.0,303.28 L405.0,303.28 L406.0,303.28 L407.0,303.28 L408.0,303.28 L409.0,303.28 L410.0,303.28 L411.0,303.28 L412.0,303.28 L413.0,303.28 L414.0,303.28 L415.0,303.28 L416.0,303.28 L417.0,303.28 L418.0,303.28 L419.0,303.28 L420.0,303.28 L421.0,303.28 L422.0,303.28 L423.0,303.28 L424.0,303.28 L425.0,303.28 L426.0,303.28 L427.0,303.28 L428.0,303.28 L429.0,303.28 L430.0,303.28 L431.0,303.28 L432.0,303.28 L433.0,303.28 L434.0,303.28 L435.0,303.28 L436.0,303.28 L437.0,303.28 L438.0,303.28 L439.0,303.28 L440.0,303.28 L441.0,303.28 L442.0,303.28 L443.0,303.28 L444.0,303.28 L445.0,303.28 L446.0,303.28 L447.0,303.28 L448.0,303.28 L449.0,303.29 L450.0,303.33 L451.0,303.38 L452.0,303.46 L453.0,303.56 L454.0,303.67 L455.0,303.77 L456.0,303.87 L457.0,303.97 L458.0,304.06 L459.0,304.14 L460.0,304.20 L461.0,304.25 L462.0,304.28 L463.0,304.29 L464.0,304.29 L465.0,304.29 L466.0,304.29 L467.0,304.29 L468.0,304.29 L469.0,304.29 L470.0,304.29 L471.0,304.29 L472.0,304.29 L473.0,304.29 L474.0,304.29 L475.0,304.29 L476.0,304.29 L477.0,304.29 L478.0,304.29 L479.0,304.29 L480.0,304.29 L481.0,304.29 L482.0,304.29 L483.0,304.29 L484.0,304.29 L485.0,304.29 L486.0,304.29 L487.0,304.29 L488.0,304.29 L489.0,304.29 L490.0,304.29 L491.0,304.29 L492.0,304.29 L493.0,304.38 L494.0,304.46 L495.0,304.55 L496.0,304.63 L497.0,304.71 L498.0,304.71 L499.0,304.71 L500.0,304.71 L501.0,304.71 L502.0,304.71 L503.0,304.71 L504.0,304.71 L505.0,304.71 L506.0,304.71 L507.0,304.71 L508.0,304.71 L509.0,304.71 L510.0,304.71 L511.0,304.71 L512.0,304.71 L513.0,304.71 L514.0,304.71 L515.0,304.71 L516.0,304.71 L517.0,304.71 L518.0,304.71 L519.0,304.71 L520.0,304.71 L521.0,304.71 L522.0,304.71 L523.0,304.71 L524.0,304.71 L525.0,304.71 L526.0,304.71 L527.0,304.71 L528.0,304.71 L529.0,304.71 L530.0,304.71 L531.0,304.71 L532.0,304.71 L533.0,304.71 L534.0,304.71 L535.0,304.71 L536.0,304.71 L537.0,304.71 L538.0,304.71 L539.0,304.71 L540.0,304.71 L541.0,304.71 L542.0,304.71 L543.0,304.71 L544.0,304.71 L545.0,304.71 L546.0,304.71 L547.0,304.71 L548.0,304.71 L549.0,304.71 L550.0,304.71 L551.0,304.71 L552.0,304.71 L553.0,304.71 L554.0,304.71 L555.0,304.71 L556.0,304.71 L557.0,304.71 L558.0,304.71 L559.0,304.71 L560.0,304.71 L561.0,304.71 L562.0,304.71 L563.0,304.71 L564.0,304.71 L565.0,304.71 L566.0,304.71 L567.0,304.71 L568.0,304.71 L569.0,304.71 L570.0,304.71 L571.0,304.71 L572.0,304.71 L573.0,304.71 L574.0,304.71 L575.0,304.71 L576.0,304.71 L577.0,304.71 L578.0,304.71 L579.0,304.71 L580.0,304.71 L581.0,304.69 L582.0,304.61 L583.0,304.48 L584.0,304.29 L585.0,304.05 L586.0,303.78 L587.0,303.51 L588.0,303.24 L589.0,302.97 L590.0,302.70 L591.0,302.43 L592.0,302.16 L593.0,302.06 L594.0,302.01 L595.0,302.01 L596.0,302.07 L597.0,302.19 L598.0,302.19 L599.0,302.19 L600.0,302.19 L601.0,302.19 L602.0,302.19 L603.0,302.19 L604.0,302.19 L605.0,302.19 L606.0,302.19 L607.0,302.19 L608.0,302.19 L609.0,302.19 L610.0,302.19 L611.0,302.19 L612.0,302.19 L613.0,302.19 L614.0,302.19 L615.0,302.19 L616.0,302.19 L617.0,302.19 L618.0,302.19 L619.0,302.19 L620.0,302.19 L621.0,302.19 L622.0,302.19 L623.0,302.19 L624.0,302.19 L625.0,302.19 L626.0,302.19 L627.0,302.19 L628.0,302.19 L629.0,302.19 L630.0,302.19 L631.0,302.19 L632.0,302.19 L633.0,302.19 L634.0,302.19 L635.0,302.19 L636.0,302.19 L637.0,302.19 L638.0,302.19 L639.0,302.19 L640.0,302.19 L641.0,302.19 L642.0,302.19 L643.0,302.19 L644.0,302.19 L645.0,302.19 L646.0,302.22 L647.0,302.29 L648.0,302.41 L649.0,302.56 L650.0,302.75 L651.0,302.95 L652.0,303.15 L653.0,303.35 L654.0,303.54 L655.0,303.68 L656.0,303.79 L657.0,303.86 L658.0,303.90 L659.0,303.91 L660.0,303.92 L661.0,303.93 L662.0,303.94 L663.0,303.95 L664.0,303.96 L665.0,303.97 L666.0,303.98 L667.0,303.99 L668.0,304.00 L669.0,304.02 L670.0,304.03 L671.0,304.04 L672.0,304.05 L673.0,304.06 L674.0,304.07 L675.0,304.08 L676.0,304.09 L677.0,304.10 L678.0,304.11 L679.0,304.12 L680.0,304.13 L681.0,304.14 L682.0,304.15 L683.0,304.16 L684.0,304.18 L685.0,304.19 L686.0,304.20 L687.0,304.21 L688.0,304.22 L689.0,304.23 L690.0,304.24 L691.0,304.25 L692.0,304.26 L693.0,304.27 L694.0,304.28 L695.0,304.29 L696.0,304.29 L697.0,304.29 L698.0,304.29 L699.0,304.29 L700.0,304.29 L701.0,304.29 L702.0,304.29 L703.0,304.29 L704.0,304.29 L705.0,304.29 L706.0,304.29 L707.0,304.29 L708.0,304.29 L709.0,304.29 L710.0,304.30 L711.0,304.32 L712.0,304.36 L713.0,304.43 L714.0,304.51 L715.0,304.61 L716.0,304.71 L717.0,304.81 L718.0,304.91 L719.0,304.99 L720.0,305.06 L721.0,305.10 L722.0,305.13 L723.0,305.13 L724.0,305.13 L725.0,305.13 L726.0,305.13 L727.0,305.13 L728.0,305.13 L729.0,305.13 L730.0,305.13 L731.0,305.13 L732.0,305.13 L733.0,305.13 L734.0,305.13 L735.0,305.13 L736.0,305.13 L737.0,305.13 L738.0,305.13 L739.0,305.13 L740.0,305.13 L741.0,305.13 L742.0,305.13 L743.0,305.13 L744.0,305.13 L745.0,305.13 L746.0,305.13 L747.0,305.13 L748.0,305.13 L749.0,305.13 L750.0,305.13 L751.0,305.13 L752.0,305.13 L753.0,305.13 L754.0,305.13 L755.0,305.13 L756.0,305.13 L757.0,305.13 L758.0,305.13 L759.0,305.13 L760.0,305.13 L761.0,305.13 L762.0,305.13 L763.0,305.13 L764.0,305.13 L765.0,305.13 L766.0,305.13 L767.0,305.13 L768.0,305.13 L769.0,305.13 L770.0,305.13 L771.0,305.13 L772.0,305.13 L773.0,305.13 L774.0,305.13 L775.0,305.13 L776.0,305.11 L777.0,305.03 L778.0,304.91 L779.0,304.73 L780.0,304.51 L781.0,304.26 L782.0,304.01 L783.0,303.76 L784.0,303.51 L785.0,303.32 L786.0,303.17 L787.0,303.08 L788.0,303.03 L789.0,303.03 L790.0,303.03 L791.0,303.03 L792.0,303.03 L793.0,303.03 L794.0,303.03 L795.0,303.03 L796.0,303.03 L797.0,303.03 L798.0,303.03 L799.0,303.03 L800.0,303.03 L801.0,303.03 L802.0,303.03 L803.0,303.03 L804.0,303.03 L805.0,303.03 L806.0,303.03 L807.0,303.03 L808.0,303.03 L809.0,303.03 L810.0,303.03 L811.0,303.03 L812.0,303.03 L813.0,303.03 L814.0,303.03 L815.0,303.03 L816.0,303.03 L817.0,303.03 L818.0,303.03 L819.0,303.03 L820.0,303.03 L821.0,303.03 L822.0,303.03 L823.0,303.03 L824.0,303.03 L825.0,303.03 L826.0,303.03 L827.0,303.03 L828.0,303.03 L829.0,303.03 L830.0,303.03 L831.0,303.03 L832.0,303.03 L833.0,303.03 L834.0,303.03 L835.0,303.03 L836.0,303.03 L837.0,303.03 L838.0,303.03 L839.0,303.03 L840.0,303.03 L841.0,303.06 L842.0,303.11 L843.0,303.20 L844.0,303.31 L845.0,303.46 L846.0,303.61 L847.0,303.76 L848.0,303.91 L849.0,304.05 L850.0,304.15 L851.0,304.23 L852.0,304.28 L853.0,304.29 L854.0,304.29 L855.0,304.29 L856.0,304.29 L857.0,304.29 L858.0,304.29 L859.0,304.29 L860.0,304.29 L861.0,304.29 L862.0,304.29 L863.0,304.29 L864.0,304.29 L865.0,304.29 L866.0,304.29 L867.0,304.29 L868.0,304.29 L869.0,304.29 L870.0,304.29 L871.0,304.29 L872.0,304.29 L873.0,304.29 L874.0,304.29 L875.0,304.29 L876.0,304.29 L877.0,304.29 L878.0,304.29 L879.0,304.29 L880.0,304.29 L881.0,304.29 L882.0,304.29 L883.0,304.29 L884.0,304.29 L885.0,304.29 L886.0,304.29 L887.0,304.29 L888.0,304.29 L889.0,304.29 L890.0,304.29 L891.0,304.29 L892.0,304.29 L893.0,304.29 L894.0,304.29 L895.0,304.29 L896.0,304.29 L897.0,304.29 L898.0,304.29 L899.0,304.29 L900.0,304.29 L901.0,304.29 L902.0,304.29 L903.0,304.29 L904.0,304.29 L905.0,304.29 L906.0,304.30 L907.0,304.32 L908.0,304.35 L909.0,304.39 L910.0,304.45 L911.0,304.52 L912.0,304.58 L913.0,304.65 L914.0,304.72 L915.0,304.78 L916.0,304.85 L917.0,304.92 L918.0,304.98 L919.0,305.04 L920.0,305.08 L921.0,305.11 L922.0,305.13 L923.0,305.13 L924.0,305.13 L925.0,305.13 L926.0,305.13 L927.0,305.13 L928.0,305.13 L929.0,305.13 L930.0,305.13 L931.0,305.13 L932.0,305.13 L933.0,305.13 L934.0,305.13 L935.0,305.13 L936.0,305.13 L937.0,305.13 L938.0,305.13 L939.0,305.13 L940.0,305.13 L941.0,305.13 L942.0,305.13 L943.0,305.13 L944.0,305.13 L945.0,305.13 L946.0,305.13 L947.0,305.13 L948.0,305.13 L949.0,305.13 L950.0,305.13 L951.0,305.13 L952.0,305.13 L953.0,305.13 L954.0,305.13 L955.0,305.13 L956.0,305.13 L957.0,305.13 L958.0,305.13 L959.0,305.13 L960.0,305.13 L961.0,305.13 L962.0,305.13 L963.0,305.13 L964.0,305.13 L965.0,305.13 L966.0,305.13 L967.0,305.13 L968.0,305.13 L969.0,305.12 L970.0,305.03 L971.0,304.87 L972.0,304.65 L973.0,304.35 L974.0,304.00 L975.0,303.65 L976.0,303.30 L977.0,302.95 L978.0,302.66 L979.0,302.44 L980.0,302.29 L981.0,302.22 L982.0,302.21 L983.0,302.22 L984.0,302.23 L985.0,302.24 L986.0,302.24 L987.0,302.25 L988.0,302.26 L989.0,302.27 L990.0,302.27 L991.0,302.28 L992.0,302.29 L993.0,302.36 L994.0,302.42 L995.0,302.48 L996.0,302.54 L997.0,302.59 L998.0,302.59 L999.0,302.58 L1000.0,302.57 L1001.0,302.56 L1002.0,302.55 L1003.0,302.55 L1004.0,302.54 L1005.0,302.53 L1006.0,302.52 L1007.0,302.51 L1008.0,302.51 L1009.0,302.50 L1010.0,302.49 L1011.0,302.48 L1012.0,302.47 L1013.0,302.47 L1014.0,302.46 L1015.0,302.45 L1016.0,302.44 L1017.0,302.43 L1018.0,302.43 L1019.0,302.42 L1020.0,302.41 L1021.0,302.40 L1022.0,302.39 L1023.0,302.39 L1024.0,302.38 L1025.0,302.37 L1026.0,302.36 L1027.0,302.35 L1028.0,302.35 L1029.0,302.34 L1030.0,302.33 L1031.0,302.34 L1032.0,302.37 L1033.0,302.41 L1034.0,302.48 L1035.0,302.56 L1036.0,302.67 L1037.0,302.83 L1038.0,303.04 L1039.0,303.30 L1040.0,303.62 L1041.0,303.97 L1042.0,304.32 L1043.0,304.67 L1044.0,305.02 L1045.0,305.36 L1046.0,305.61 L1047.0,305.77 L1048.0,305.85 L1049.0,305.84 L1050.0,305.76 L1051.0,305.68 L1052.0,305.63 L1053.0,305.59 L1054.0,305.56 L1055.0,305.56 L1056.0,305.56 L1057.0,305.56 L1058.0,305.56 L1059.0,305.56 L1060.0,305.56 L1061.0,305.56 L1062.0,305.56 L1063.0,305.56 L1064.0,305.56 L1065.0,305.56 L1066.0,305.56 L1067.0,305.56 L1068.0,305.56 L1069.0,305.56 L1070.0,305.56 L1071.0,305.56 L1072.0,305.56 L1073.0,305.56 L1074.0,305.56 L1075.0,305.56 L1076.0,305.56 L1077.0,305.56 L1078.0,305.56 L1079.0,305.56 L1080.0,305.56 L1081.0,305.56 L1082.0,305.56 L1083.0,305.56 L1084.0,305.56 L1085.0,305.56 L1086.0,305.56 L1087.0,305.56 L1088.0,305.56 L1089.0,305.56 L1090.0,305.56 L1091.0,305.56 L1092.0,305.56 L1093.0,305.56 L1094.0,305.56 L1095.0,305.56 L1096.0,305.56 L1097.0,305.56 L1098.0,305.56 L1099.0,305.56 L1100.0,305.56 L1101.0,305.56 L1102.0,305.56 L1103.0,305.56 L1103.0,307.0 Z"/>
<rect x="297" y="306" width="806" height="1" fill="#3daee9"/>
</svg>

<!-- CPU legend -->
<div class="lb" style="left:265px;top:320px;background:#3daee9"></div>
<div class="t s13" style="left:273px;top:323px;transform:scaleX(0.89);">CPU ...</div><div class="t s13" style="left:320.5px;top:323px;transform:scaleX(0.947);">4.3%</div>
<div class="lb" style="left:368px;top:320px;background:#4d3de9"></div>
<div class="t s13" style="left:376px;top:323px;transform:scaleX(0.89);">CPU ...</div><div class="t s13" style="left:423.5px;top:323px;transform:scaleX(0.92);">92.0%</div>
<div class="lb" style="left:477px;top:320px;background:#ce3de9"></div>
<div class="t s13" style="left:485px;top:323px;transform:scaleX(0.89);">CPU ...</div><div class="t s13" style="left:532.5px;top:323px;transform:scaleX(0.933);">8.0%</div>
<div class="lb" style="left:580px;top:320px;background:#e93d83"></div>
<div class="t s13" style="left:588px;top:323px;transform:scaleX(0.89);">CPU ...</div><div class="t s13" style="left:635.5px;top:323px;transform:scaleX(0.975);">11.5%</div>
<div class="lb" style="left:690px;top:320px;background:#e9783d"></div>
<div class="t s13" style="left:698px;top:323px;transform:scaleX(0.89);">CPU ...</div><div class="t s13" style="left:745.5px;top:323px;transform:scaleX(0.93);">37.3%</div>
<div class="lb" style="left:799px;top:320px;background:#d9e93d"></div>
<div class="t s13" style="left:807px;top:323px;transform:scaleX(0.89);">CPU ...</div><div class="t s13" style="left:854.5px;top:323px;transform:scaleX(0.945);">17.6%</div>
<div class="lb" style="left:909px;top:320px;background:#58e93d"></div>
<div class="t s13" style="left:917px;top:323px;transform:scaleX(0.89);">CPU ...</div><div class="t s13" style="left:964.5px;top:323px;transform:scaleX(0.933);">8.2%</div>
<div class="lb" style="left:1011px;top:320px;background:#3de9a3"></div>
<div class="t s13" style="left:1019px;top:323px;transform:scaleX(0.89);">CPU ...</div><div class="t s13" style="left:1066.5px;top:323px;transform:scaleX(0.975);">11.8%</div>

<!-- Memory card -->
<div class="card" style="left:261px;top:382px;"></div>
<div class="grid" style="left:312px;top:393px;width:791px;"></div>
<div class="grid" style="left:312px;top:425px;width:791px;"></div>
<div class="t s11" style="left:265px;top:389px;">15.5 GiB</div>
<div class="t s11" style="left:265px;top:420px;">11.6 GiB</div>
<div class="t s11" style="left:272px;top:452px;">7.7 GiB</div>
<div class="t s11" style="left:272px;top:483px;">3.9 GiB</div>
<div class="t s11" style="left:292px;top:514px;">0 B</div>
<svg class="a" style="left:0;top:0" width="1188" height="859" viewBox="0 0 1188 859">
<path fill="#3daee9" d="M312,518.5 L312.0,430.30 L360.0,430.10 L385.0,429.90 L400.0,429.50 L420.0,429.60 L432.0,430.20 L520.0,430.20 L560.0,430.00 L700.0,429.90 L800.0,429.70 L940.0,429.90 L980.0,430.20 L1103.0,430.20 L1103,518.5 Z"/>
</svg>
<div class="lb" style="left:265px;top:532px;background:#3daee9"></div>
<div class="t s13" style="left:273px;top:535px;transform:scaleX(1.015);">Used Physical Memory</div><div class="t s13" style="left:416px;top:535px;transform:scaleX(0.975);">11.0 GiB</div>
<div class="lb" style="left:484px;top:532px;background:#e9783d"></div>
<div class="t s13" style="left:492px;top:535px;">Used Swap Memory</div><div class="t s13" style="left:617.5px;top:535px;transform:scaleX(0.968);">2.0 GiB</div>

<!-- Network card -->
<div class="card" style="left:261px;top:594px;"></div>
<div class="grid" style="left:327px;top:605px;width:776px;"></div>
<div class="grid" style="left:327px;top:637px;width:776px;"></div>
<div class="grid" style="left:327px;top:668px;width:776px;"></div>
<div class="grid" style="left:327px;top:699px;width:776px;"></div>
<div class="grid" style="left:327px;top:730px;width:776px;"></div>
<div class="t s11" style="left:266px;top:601px;">646.2 KiB/s</div>
<div class="t s11" style="left:266px;top:632px;">484.6 KiB/s</div>
<div class="t s11" style="left:266px;top:664px;">323.1 KiB/s</div>
<div class="t s11" style="left:266px;top:695px;">161.5 KiB/s</div>
<div class="t s11" style="left:298px;top:726px;">0 B/s</div>
<svg class="a" style="left:0;top:0" width="1188" height="859" viewBox="0 0 1188 859">
<path fill="#e9783d" d="M954.5,730.8 Q957.9,726.3 961.2,730.8 Z"/>
<path fill="#e9783d" d="M1001.8,730.8 Q1004.9,726.3 1008.0,730.8 Z"/>
<path fill="#e9783d" d="M1048.2,730.8 Q1052.0,726.3 1055.8,730.8 Z"/>
<path fill="#e9783d" d="M1065.1,730.8 Q1068.9,726.3 1072.7,730.8 Z"/>
<path fill="#e9783d" d="M1078.6,730.8 Q1082.8,726.3 1087.0,730.8 Z"/>
<path fill="none" stroke="#3daee9" stroke-width="1" d="M327,730.3 L1103,730.3"/>
<path fill="#3daee9" d="M327,730.3 L327.0,730.30 L327.5,730.30 L328.0,730.30 L328.5,730.29 L329.0,730.29 L329.5,730.29 L330.0,730.29 L330.5,730.29 L331.0,730.28 L331.5,730.28 L332.0,730.28 L332.5,730.28 L333.0,730.28 L333.5,730.27 L334.0,730.27 L334.5,730.27 L335.0,730.27 L335.5,730.27 L336.0,730.26 L336.5,730.26 L337.0,730.26 L337.5,730.26 L338.0,730.26 L338.5,730.25 L339.0,730.25 L339.5,730.25 L340.0,730.25 L340.5,730.25 L341.0,730.24 L341.5,730.24 L342.0,730.24 L342.5,730.24 L343.0,730.24 L343.5,730.23 L344.0,730.23 L344.5,730.23 L345.0,730.23 L345.5,730.23 L346.0,730.22 L346.5,730.22 L347.0,730.22 L347.5,730.22 L348.0,730.21 L348.5,730.21 L349.0,730.21 L349.5,730.21 L350.0,730.21 L350.5,730.20 L351.0,730.20 L351.5,730.20 L352.0,730.20 L352.5,730.20 L353.0,730.19 L353.5,730.19 L354.0,730.19 L354.5,730.19 L355.0,730.19 L355.5,730.18 L356.0,730.18 L356.5,730.18 L357.0,730.18 L357.5,730.18 L358.0,730.17 L358.5,730.17 L359.0,730.17 L359.5,730.17 L360.0,730.17 L360.5,730.16 L361.0,730.16 L361.5,730.16 L362.0,730.16 L362.5,730.16 L363.0,730.15 L363.5,730.15 L364.0,730.15 L364.5,730.15 L365.0,730.14 L365.5,730.14 L366.0,730.14 L366.5,730.14 L367.0,730.14 L367.5,730.13 L368.0,730.13 L368.5,730.13 L369.0,730.13 L369.5,730.13 L370.0,730.12 L370.5,730.12 L371.0,730.12 L371.5,730.12 L372.0,730.12 L372.5,730.11 L373.0,730.11 L373.5,730.11 L374.0,730.11 L374.5,730.11 L375.0,730.10 L375.5,730.10 L376.0,730.10 L376.5,730.10 L377.0,730.10 L377.5,730.09 L378.0,730.09 L378.5,730.09 L379.0,730.09 L379.5,730.09 L380.0,730.08 L380.5,730.08 L381.0,730.08 L381.5,730.08 L382.0,730.07 L382.5,730.07 L383.0,730.07 L383.5,730.07 L384.0,730.07 L384.5,730.06 L385.0,730.06 L385.5,730.06 L386.0,730.06 L386.5,730.06 L387.0,730.05 L387.5,730.05 L388.0,730.05 L388.5,730.05 L389.0,730.05 L389.5,730.04 L390.0,730.04 L390.5,730.04 L391.0,730.04 L391.5,730.04 L392.0,730.03 L392.5,730.03 L393.0,730.03 L393.5,730.03 L394.0,730.03 L394.5,730.02 L395.0,730.02 L395.5,730.02 L396.0,730.02 L396.5,730.02 L397.0,730.01 L397.5,730.01 L398.0,730.01 L398.5,730.01 L399.0,730.01 L399.5,730.00 L400.0,730.00 L400.5,730.00 L401.0,730.00 L401.5,729.99 L402.0,729.99 L402.5,729.99 L403.0,729.99 L403.5,729.99 L404.0,729.98 L404.5,729.98 L405.0,729.98 L405.5,729.98 L406.0,729.98 L406.5,729.97 L407.0,729.97 L407.5,729.97 L408.0,729.97 L408.5,729.96 L409.0,729.96 L409.5,729.96 L410.0,729.96 L410.5,729.96 L411.0,729.95 L411.5,729.95 L412.0,729.95 L412.5,729.95 L413.0,729.95 L413.5,729.94 L414.0,729.94 L414.5,729.94 L415.0,729.94 L415.5,729.93 L416.0,729.93 L416.5,729.93 L417.0,729.93 L417.5,729.93 L418.0,729.92 L418.5,729.92 L419.0,729.92 L419.5,729.92 L420.0,729.92 L420.5,729.91 L421.0,729.91 L421.5,729.91 L422.0,729.91 L422.5,729.90 L423.0,729.90 L423.5,729.90 L424.0,729.90 L424.5,729.90 L425.0,729.89 L425.5,729.89 L426.0,729.89 L426.5,729.89 L427.0,729.89 L427.5,729.88 L428.0,729.88 L428.5,729.88 L429.0,729.88 L429.5,729.87 L430.0,729.87 L430.5,729.87 L431.0,729.87 L431.5,729.87 L432.0,729.86 L432.5,729.86 L433.0,729.86 L433.5,729.86 L434.0,729.86 L434.5,729.85 L435.0,729.85 L435.5,729.85 L436.0,729.85 L436.5,729.84 L437.0,729.84 L437.5,729.84 L438.0,729.84 L438.5,729.84 L439.0,729.83 L439.5,729.83 L440.0,729.83 L440.5,729.83 L441.0,729.83 L441.5,729.82 L442.0,729.82 L442.5,729.82 L443.0,729.82 L443.5,729.81 L444.0,729.81 L444.5,729.81 L445.0,729.81 L445.5,729.81 L446.0,729.80 L446.5,729.80 L447.0,729.80 L447.5,729.80 L448.0,729.80 L448.5,729.79 L449.0,729.79 L449.5,729.79 L450.0,729.79 L450.5,729.78 L451.0,729.78 L451.5,729.78 L452.0,729.78 L452.5,729.78 L453.0,729.77 L453.5,729.77 L454.0,729.77 L454.5,729.77 L455.0,729.77 L455.5,729.76 L456.0,729.76 L456.5,729.76 L457.0,729.76 L457.5,729.75 L458.0,729.75 L458.5,729.75 L459.0,729.75 L459.5,729.75 L460.0,729.74 L460.5,729.74 L461.0,729.74 L461.5,729.74 L462.0,729.74 L462.5,729.73 L463.0,729.73 L463.5,729.73 L464.0,729.73 L464.5,729.72 L465.0,729.72 L465.5,729.72 L466.0,729.72 L466.5,729.72 L467.0,729.71 L467.5,729.71 L468.0,729.71 L468.5,729.71 L469.0,729.71 L469.5,729.70 L470.0,729.70 L470.5,729.71 L471.0,729.71 L471.5,729.71 L472.0,729.72 L472.5,729.73 L473.0,729.73 L473.5,729.74 L474.0,729.74 L474.5,729.75 L475.0,729.76 L475.5,729.76 L476.0,729.77 L476.5,729.77 L477.0,729.78 L477.5,729.79 L478.0,729.79 L478.5,729.80 L479.0,729.80 L479.5,729.81 L480.0,729.82 L480.5,729.82 L481.0,729.83 L481.5,729.84 L482.0,729.84 L482.5,729.85 L483.0,729.85 L483.5,729.86 L484.0,729.86 L484.5,729.87 L485.0,729.88 L485.5,729.88 L486.0,729.89 L486.5,729.89 L487.0,729.90 L487.5,729.91 L488.0,729.91 L488.5,729.92 L489.0,729.92 L489.5,729.93 L490.0,729.94 L490.5,729.94 L491.0,729.95 L491.5,729.95 L492.0,729.96 L492.5,729.97 L493.0,729.97 L493.5,729.98 L494.0,729.98 L494.5,729.99 L495.0,730.00 L495.5,730.00 L496.0,730.01 L496.5,730.01 L497.0,730.02 L497.5,730.03 L498.0,730.03 L498.5,730.04 L499.0,730.05 L499.5,730.05 L500.0,730.06 L500.5,730.06 L501.0,730.07 L501.5,730.07 L502.0,730.08 L502.5,730.09 L503.0,730.09 L503.5,730.10 L504.0,730.10 L504.5,730.11 L505.0,730.12 L505.5,730.12 L506.0,730.13 L506.5,730.13 L507.0,730.14 L507.5,730.15 L508.0,730.15 L508.5,730.16 L509.0,730.16 L509.5,730.17 L510.0,730.18 L510.5,730.18 L511.0,730.19 L511.5,730.19 L512.0,730.20 L512.5,730.21 L513.0,730.21 L513.5,730.22 L514.0,730.22 L514.5,730.23 L515.0,730.24 L515.5,730.24 L516.0,730.25 L516.5,730.25 L517.0,730.26 L517.5,730.27 L518.0,730.27 L518.5,730.28 L519.0,730.28 L519.5,730.29 L520.0,730.29 L520.5,730.30 L521.0,730.30 L521.5,730.29 L522.0,730.29 L522.5,730.29 L523.0,730.29 L523.5,730.28 L524.0,730.28 L524.5,730.28 L525.0,730.28 L525.5,730.27 L526.0,730.27 L526.5,730.27 L527.0,730.27 L527.5,730.26 L528.0,730.26 L528.5,730.26 L529.0,730.26 L529.5,730.25 L530.0,730.25 L530.5,730.25 L531.0,730.25 L531.5,730.24 L532.0,730.24 L532.5,730.24 L533.0,730.24 L533.5,730.23 L534.0,730.23 L534.5,730.23 L535.0,730.23 L535.5,730.22 L536.0,730.22 L536.5,730.22 L537.0,730.22 L537.5,730.21 L538.0,730.21 L538.5,730.21 L539.0,730.21 L539.5,730.20 L540.0,730.20 L540.5,730.20 L541.0,730.20 L541.5,730.19 L542.0,730.19 L542.5,730.19 L543.0,730.19 L543.5,730.18 L544.0,730.18 L544.5,730.18 L545.0,730.18 L545.5,730.17 L546.0,730.17 L546.5,730.17 L547.0,730.17 L547.5,730.16 L548.0,730.16 L548.5,730.16 L549.0,730.16 L549.5,730.15 L550.0,730.15 L550.5,730.15 L551.0,730.15 L551.5,730.14 L552.0,730.14 L552.5,730.14 L553.0,730.14 L553.5,730.13 L554.0,730.13 L554.5,730.13 L555.0,730.13 L555.5,730.12 L556.0,730.12 L556.5,730.12 L557.0,730.12 L557.5,730.11 L558.0,730.11 L558.5,730.11 L559.0,730.11 L559.5,730.10 L560.0,730.10 L560.5,730.10 L561.0,730.10 L561.5,730.09 L562.0,730.09 L562.5,730.09 L563.0,730.09 L563.5,730.08 L564.0,730.08 L564.5,730.08 L565.0,730.08 L565.5,730.07 L566.0,730.07 L566.5,730.07 L567.0,730.07 L567.5,730.06 L568.0,730.06 L568.5,730.06 L569.0,730.06 L569.5,730.05 L570.0,730.05 L570.5,730.05 L571.0,730.05 L571.5,730.04 L572.0,730.04 L572.5,730.04 L573.0,730.04 L573.5,730.03 L574.0,730.03 L574.5,730.03 L575.0,730.03 L575.5,730.02 L576.0,730.02 L576.5,730.02 L577.0,730.02 L577.5,730.01 L578.0,730.01 L578.5,730.01 L579.0,730.01 L579.5,730.00 L580.0,730.00 L580.5,730.00 L581.0,730.00 L581.5,729.99 L582.0,729.99 L582.5,729.99 L583.0,729.99 L583.5,729.98 L584.0,729.98 L584.5,729.98 L585.0,729.98 L585.5,729.97 L586.0,729.97 L586.5,729.97 L587.0,729.97 L587.5,729.96 L588.0,729.96 L588.5,729.96 L589.0,729.96 L589.5,729.95 L590.0,729.95 L590.5,729.95 L591.0,729.95 L591.5,729.94 L592.0,729.94 L592.5,729.94 L593.0,729.94 L593.5,729.93 L594.0,729.93 L594.5,729.93 L595.0,729.93 L595.5,729.92 L596.0,729.92 L596.5,729.92 L597.0,729.92 L597.5,729.91 L598.0,729.91 L598.5,729.91 L599.0,729.91 L599.5,729.90 L600.0,729.90 L600.5,729.90 L601.0,729.91 L601.5,729.91 L602.0,729.92 L602.5,729.92 L603.0,729.93 L603.5,729.93 L604.0,729.94 L604.5,729.94 L605.0,729.95 L605.5,729.95 L606.0,729.96 L606.5,729.96 L607.0,729.97 L607.5,729.97 L608.0,729.98 L608.5,729.98 L609.0,729.99 L609.5,729.99 L610.0,730.00 L610.5,730.00 L611.0,730.01 L611.5,730.01 L612.0,730.02 L612.5,730.02 L613.0,730.03 L613.5,730.03 L614.0,730.04 L614.5,730.04 L615.0,730.05 L615.5,730.05 L616.0,730.06 L616.5,730.06 L617.0,730.07 L617.5,730.07 L618.0,730.08 L618.5,730.08 L619.0,730.09 L619.5,730.09 L620.0,730.10 L620.5,730.10 L621.0,730.11 L621.5,730.11 L622.0,730.12 L622.5,730.12 L623.0,730.13 L623.5,730.13 L624.0,730.14 L624.5,730.14 L625.0,730.15 L625.5,730.15 L626.0,730.16 L626.5,730.16 L627.0,730.17 L627.5,730.17 L628.0,730.18 L628.5,730.18 L629.0,730.19 L629.5,730.19 L630.0,730.20 L630.5,730.20 L631.0,730.21 L631.5,730.21 L632.0,730.22 L632.5,730.22 L633.0,730.23 L633.5,730.23 L634.0,730.24 L634.5,730.24 L635.0,730.25 L635.5,730.25 L636.0,730.26 L636.5,730.26 L637.0,730.27 L637.5,730.27 L638.0,730.28 L638.5,730.28 L639.0,730.29 L639.5,730.29 L640.0,730.30 L640.5,730.30 L641.0,730.30 L641.5,730.30 L642.0,730.29 L642.5,730.29 L643.0,730.29 L643.5,730.29 L644.0,730.29 L644.5,730.29 L645.0,730.28 L645.5,730.28 L646.0,730.28 L646.5,730.28 L647.0,730.28 L647.5,730.28 L648.0,730.27 L648.5,730.27 L649.0,730.27 L649.5,730.27 L650.0,730.27 L650.5,730.27 L651.0,730.26 L651.5,730.26 L652.0,730.26 L652.5,730.26 L653.0,730.26 L653.5,730.26 L654.0,730.25 L654.5,730.25 L655.0,730.25 L655.5,730.25 L656.0,730.25 L656.5,730.25 L657.0,730.24 L657.5,730.24 L658.0,730.24 L658.5,730.24 L659.0,730.24 L659.5,730.24 L660.0,730.23 L660.5,730.23 L661.0,730.23 L661.5,730.23 L662.0,730.23 L662.5,730.23 L663.0,730.22 L663.5,730.22 L664.0,730.22 L664.5,730.22 L665.0,730.22 L665.5,730.22 L666.0,730.21 L666.5,730.21 L667.0,730.21 L667.5,730.21 L668.0,730.21 L668.5,730.21 L669.0,730.20 L669.5,730.20 L670.0,730.20 L670.5,730.20 L671.0,730.20 L671.5,730.20 L672.0,730.19 L672.5,730.19 L673.0,730.19 L673.5,730.19 L674.0,730.19 L674.5,730.19 L675.0,730.18 L675.5,730.18 L676.0,730.18 L676.5,730.18 L677.0,730.18 L677.5,730.18 L678.0,730.17 L678.5,730.17 L679.0,730.17 L679.5,730.17 L680.0,730.17 L680.5,730.17 L681.0,730.16 L681.5,730.16 L682.0,730.16 L682.5,730.16 L683.0,730.16 L683.5,730.16 L684.0,730.15 L684.5,730.15 L685.0,730.15 L685.5,730.15 L686.0,730.15 L686.5,730.15 L687.0,730.14 L687.5,730.14 L688.0,730.14 L688.5,730.14 L689.0,730.14 L689.5,730.14 L690.0,730.13 L690.5,730.13 L691.0,730.13 L691.5,730.13 L692.0,730.13 L692.5,730.13 L693.0,730.12 L693.5,730.12 L694.0,730.12 L694.5,730.12 L695.0,730.12 L695.5,730.12 L696.0,730.11 L696.5,730.11 L697.0,730.11 L697.5,730.11 L698.0,730.11 L698.5,730.11 L699.0,730.10 L699.5,730.10 L700.0,730.10 L700.5,730.10 L701.0,730.10 L701.5,730.10 L702.0,730.09 L702.5,730.09 L703.0,730.09 L703.5,730.09 L704.0,730.09 L704.5,730.09 L705.0,730.08 L705.5,730.08 L706.0,730.08 L706.5,730.08 L707.0,730.08 L707.5,730.08 L708.0,730.07 L708.5,730.07 L709.0,730.07 L709.5,730.07 L710.0,730.07 L710.5,730.07 L711.0,730.06 L711.5,730.06 L712.0,730.06 L712.5,730.06 L713.0,730.06 L713.5,730.06 L714.0,730.05 L714.5,730.05 L715.0,730.05 L715.5,730.05 L716.0,730.05 L716.5,730.05 L717.0,730.04 L717.5,730.04 L718.0,730.04 L718.5,730.04 L719.0,730.04 L719.5,730.04 L720.0,730.03 L720.5,730.03 L721.0,730.03 L721.5,730.03 L722.0,730.03 L722.5,730.03 L723.0,730.02 L723.5,730.02 L724.0,730.02 L724.5,730.02 L725.0,730.02 L725.5,730.02 L726.0,730.01 L726.5,730.01 L727.0,730.01 L727.5,730.01 L728.0,730.01 L728.5,730.01 L729.0,730.00 L729.5,730.00 L730.0,730.00 L730.5,730.00 L731.0,730.00 L731.5,730.00 L732.0,729.99 L732.5,729.99 L733.0,729.99 L733.5,729.99 L734.0,729.99 L734.5,729.99 L735.0,729.98 L735.5,729.98 L736.0,729.98 L736.5,729.98 L737.0,729.98 L737.5,729.98 L738.0,729.97 L738.5,729.97 L739.0,729.97 L739.5,729.97 L740.0,729.97 L740.5,729.97 L741.0,729.96 L741.5,729.96 L742.0,729.96 L742.5,729.96 L743.0,729.96 L743.5,729.96 L744.0,729.95 L744.5,729.95 L745.0,729.95 L745.5,729.95 L746.0,729.95 L746.5,729.95 L747.0,729.94 L747.5,729.94 L748.0,729.94 L748.5,729.94 L749.0,729.94 L749.5,729.94 L750.0,729.93 L750.5,729.93 L751.0,729.93 L751.5,729.93 L752.0,729.93 L752.5,729.93 L753.0,729.92 L753.5,729.92 L754.0,729.92 L754.5,729.92 L755.0,729.92 L755.5,729.92 L756.0,729.91 L756.5,729.91 L757.0,729.91 L757.5,729.91 L758.0,729.91 L758.5,729.91 L759.0,729.90 L759.5,729.90 L760.0,729.90 L760.5,729.90 L761.0,729.90 L761.5,729.90 L762.0,729.90 L762.5,729.90 L763.0,729.90 L763.5,729.90 L764.0,729.90 L764.5,729.90 L765.0,729.90 L765.5,729.90 L766.0,729.90 L766.5,729.90 L767.0,729.90 L767.5,729.91 L768.0,729.91 L768.5,729.91 L769.0,729.91 L769.5,729.91 L770.0,729.91 L770.5,729.91 L771.0,729.91 L771.5,729.91 L772.0,729.91 L772.5,729.91 L773.0,729.91 L773.5,729.91 L774.0,729.91 L774.5,729.91 L775.0,729.91 L775.5,729.91 L776.0,729.91 L776.5,729.91 L777.0,729.91 L777.5,729.91 L778.0,729.91 L778.5,729.91 L779.0,729.91 L779.5,729.91 L780.0,729.91 L780.5,729.91 L781.0,729.91 L781.5,729.92 L782.0,729.92 L782.5,729.92 L783.0,729.92 L783.5,729.92 L784.0,729.92 L784.5,729.92 L785.0,729.92 L785.5,729.92 L786.0,729.92 L786.5,729.92 L787.0,729.92 L787.5,729.92 L788.0,729.92 L788.5,729.92 L789.0,729.92 L789.5,729.92 L790.0,729.92 L790.5,729.92 L791.0,729.92 L791.5,729.92 L792.0,729.92 L792.5,729.92 L793.0,729.92 L793.5,729.92 L794.0,729.92 L794.5,729.92 L795.0,729.92 L795.5,729.93 L796.0,729.93 L796.5,729.93 L797.0,729.93 L797.5,729.93 L798.0,729.93 L798.5,729.93 L799.0,729.93 L799.5,729.93 L800.0,729.93 L800.5,729.93 L801.0,729.93 L801.5,729.93 L802.0,729.93 L802.5,729.93 L803.0,729.93 L803.5,729.93 L804.0,729.93 L804.5,729.93 L805.0,729.93 L805.5,729.93 L806.0,729.93 L806.5,729.93 L807.0,729.93 L807.5,729.93 L808.0,729.93 L808.5,729.93 L809.0,729.93 L809.5,729.94 L810.0,729.94 L810.5,729.94 L811.0,729.94 L811.5,729.94 L812.0,729.94 L812.5,729.94 L813.0,729.94 L813.5,729.94 L814.0,729.94 L814.5,729.94 L815.0,729.94 L815.5,729.94 L816.0,729.94 L816.5,729.94 L817.0,729.94 L817.5,729.94 L818.0,729.94 L818.5,729.94 L819.0,729.94 L819.5,729.94 L820.0,729.94 L820.5,729.94 L821.0,729.94 L821.5,729.94 L822.0,729.94 L822.5,729.94 L823.0,729.94 L823.5,729.95 L824.0,729.95 L824.5,729.95 L825.0,729.95 L825.5,729.95 L826.0,729.95 L826.5,729.95 L827.0,729.95 L827.5,729.95 L828.0,729.95 L828.5,729.95 L829.0,729.95 L829.5,729.95 L830.0,729.95 L830.5,729.95 L831.0,729.95 L831.5,729.95 L832.0,729.95 L832.5,729.95 L833.0,729.95 L833.5,729.95 L834.0,729.95 L834.5,729.95 L835.0,729.95 L835.5,729.95 L836.0,729.95 L836.5,729.95 L837.0,729.95 L837.5,729.96 L838.0,729.96 L838.5,729.96 L839.0,729.96 L839.5,729.96 L840.0,729.96 L840.5,729.96 L841.0,729.96 L841.5,729.96 L842.0,729.96 L842.5,729.96 L843.0,729.96 L843.5,729.96 L844.0,729.96 L844.5,729.96 L845.0,729.96 L845.5,729.96 L846.0,729.96 L846.5,729.96 L847.0,729.96 L847.5,729.96 L848.0,729.96 L848.5,729.96 L849.0,729.96 L849.5,729.96 L850.0,729.96 L850.5,729.96 L851.0,729.96 L851.5,729.97 L852.0,729.97 L852.5,729.97 L853.0,729.97 L853.5,729.97 L854.0,729.97 L854.5,729.97 L855.0,729.97 L855.5,729.97 L856.0,729.97 L856.5,729.97 L857.0,729.97 L857.5,729.97 L858.0,729.97 L858.5,729.97 L859.0,729.97 L859.5,729.97 L860.0,729.97 L860.5,729.97 L861.0,729.97 L861.5,729.97 L862.0,729.97 L862.5,729.97 L863.0,729.97 L863.5,729.97 L864.0,729.97 L864.5,729.97 L865.0,729.97 L865.5,729.98 L866.0,729.98 L866.5,729.98 L867.0,729.98 L867.5,729.98 L868.0,729.98 L868.5,729.98 L869.0,729.98 L869.5,729.98 L870.0,729.98 L870.5,729.98 L871.0,729.98 L871.5,729.98 L872.0,729.98 L872.5,729.98 L873.0,729.98 L873.5,729.98 L874.0,729.98 L874.5,729.98 L875.0,729.98 L875.5,729.98 L876.0,729.98 L876.5,729.98 L877.0,729.98 L877.5,729.98 L878.0,729.98 L878.5,729.98 L879.0,729.98 L879.5,729.99 L880.0,729.99 L880.5,729.99 L881.0,729.99 L881.5,729.99 L882.0,729.99 L882.5,729.99 L883.0,729.99 L883.5,729.99 L884.0,729.99 L884.5,729.99 L885.0,729.99 L885.5,729.99 L886.0,729.99 L886.5,729.99 L887.0,729.99 L887.5,729.99 L888.0,729.99 L888.5,729.99 L889.0,729.99 L889.5,729.99 L890.0,729.99 L890.5,729.99 L891.0,729.99 L891.5,729.99 L892.0,729.99 L892.5,729.99 L893.0,729.99 L893.5,730.00 L894.0,730.00 L894.5,730.00 L895.0,730.00 L895.5,730.00 L896.0,730.00 L896.5,730.00 L897.0,730.00 L897.5,730.00 L898.0,730.00 L898.5,730.00 L899.0,730.00 L899.5,730.00 L900.0,730.00 L900.5,730.00 L901.0,730.01 L901.5,730.01 L902.0,730.01 L902.5,730.02 L903.0,730.02 L903.5,730.02 L904.0,730.03 L904.5,730.03 L905.0,730.04 L905.5,730.04 L906.0,730.04 L906.5,730.05 L907.0,730.05 L907.5,730.05 L908.0,730.06 L908.5,730.06 L909.0,730.07 L909.5,730.07 L910.0,730.07 L910.5,730.08 L911.0,730.08 L911.5,730.08 L912.0,730.09 L912.5,730.09 L913.0,730.10 L913.5,730.10 L914.0,730.10 L914.5,730.11 L915.0,730.11 L915.5,730.11 L916.0,730.12 L916.5,730.12 L917.0,730.13 L917.5,730.13 L918.0,730.13 L918.5,730.14 L919.0,730.14 L919.5,730.14 L920.0,730.15 L920.5,730.15 L921.0,730.16 L921.5,730.16 L922.0,730.16 L922.5,730.17 L923.0,730.17 L923.5,730.17 L924.0,730.18 L924.5,730.18 L925.0,730.19 L925.5,730.19 L926.0,730.19 L926.5,730.20 L927.0,730.20 L927.5,730.20 L928.0,730.21 L928.5,730.21 L929.0,730.22 L929.5,730.22 L930.0,730.22 L930.5,730.23 L931.0,730.23 L931.5,730.23 L932.0,730.24 L932.5,730.24 L933.0,730.25 L933.5,730.25 L934.0,730.25 L934.5,730.26 L935.0,730.26 L935.5,730.26 L936.0,730.27 L936.5,730.27 L937.0,730.28 L937.5,730.28 L938.0,730.28 L938.5,730.29 L939.0,730.29 L939.5,730.29 L940.0,730.27 L940.5,730.22 L941.0,730.15 L941.5,730.05 L942.0,729.95 L942.5,729.85 L943.0,729.75 L943.5,729.65 L944.0,729.55 L944.5,729.45 L945.0,729.33 L945.5,729.19 L946.0,729.02 L946.5,728.84 L947.0,728.66 L947.5,728.47 L948.0,728.29 L948.5,728.11 L949.0,727.92 L949.5,727.74 L950.0,727.56 L950.5,727.37 L951.0,727.34 L951.5,727.45 L952.0,727.70 L952.5,728.10 L953.0,728.50 L953.5,728.90 L954.0,729.30 L954.5,729.70 L955.0,730.00 L955.5,730.20 L956.0,730.30 L956.5,730.30 L957.0,730.30 L957.5,730.30 L958.0,730.30 L958.5,730.30 L959.0,730.30 L959.5,730.30 L960.0,730.30 L960.5,730.30 L961.0,728.99 L961.5,725.18 L962.0,718.86 L962.5,710.03 L963.0,699.99 L963.5,689.96 L964.0,679.93 L964.5,670.32 L965.0,661.27 L965.5,652.76 L966.0,644.81 L966.5,636.98 L967.0,629.15 L967.5,621.33 L968.0,613.50 L968.5,607.63 L969.0,605.50 L969.5,605.50 L970.0,605.50 L970.5,605.50 L971.0,605.50 L971.5,605.50 L972.0,605.50 L972.5,605.50 L973.0,605.50 L973.5,605.50 L974.0,605.50 L974.5,605.50 L975.0,605.50 L975.5,605.50 L976.0,605.50 L976.5,605.50 L977.0,605.50 L977.5,605.50 L978.0,605.50 L978.5,605.50 L979.0,605.50 L979.5,607.48 L980.0,612.99 L980.5,620.19 L981.0,627.39 L981.5,634.59 L982.0,641.79 L982.5,648.99 L983.0,655.90 L983.5,662.34 L984.0,668.32 L984.5,673.84 L985.0,679.17 L985.5,684.50 L986.0,689.84 L986.5,695.17 L987.0,700.50 L987.5,705.84 L988.0,710.44 L988.5,713.54 L989.0,715.13 L989.5,715.22 L990.0,714.53 L990.5,713.85 L991.0,713.16 L991.5,712.48 L992.0,711.79 L992.5,711.10 L993.0,710.42 L993.5,709.73 L994.0,709.35 L994.5,709.44 L995.0,709.98 L995.5,710.99 L996.0,712.15 L996.5,713.31 L997.0,714.47 L997.5,715.63 L998.0,716.82 L998.5,718.17 L999.0,719.68 L999.5,721.34 L1000.0,723.12 L1000.5,724.90 L1001.0,726.68 L1001.5,728.25 L1002.0,729.38 L1002.5,730.06 L1003.0,730.30 L1003.5,730.30 L1004.0,730.30 L1004.5,730.30 L1005.0,730.30 L1005.5,730.30 L1006.0,730.30 L1006.5,730.30 L1007.0,730.30 L1007.5,730.30 L1008.0,730.30 L1008.5,728.85 L1009.0,725.90 L1009.5,721.44 L1010.0,715.47 L1010.5,709.44 L1011.0,703.41 L1011.5,697.40 L1012.0,691.48 L1012.5,685.65 L1013.0,679.91 L1013.5,674.24 L1014.0,668.64 L1014.5,663.49 L1015.0,658.80 L1015.5,654.58 L1016.0,650.74 L1016.5,646.95 L1017.0,643.66 L1017.5,640.87 L1018.0,638.59 L1018.5,636.79 L1019.0,635.29 L1019.5,634.24 L1020.0,633.64 L1020.5,633.50 L1021.0,633.50 L1021.5,633.93 L1022.0,634.81 L1022.5,636.15 L1023.0,637.94 L1023.5,639.95 L1024.0,642.33 L1024.5,645.07 L1025.0,648.18 L1025.5,651.43 L1026.0,654.58 L1026.5,657.63 L1027.0,660.57 L1027.5,663.43 L1028.0,666.28 L1028.5,669.14 L1029.0,672.00 L1029.5,674.86 L1030.0,677.71 L1030.5,680.57 L1031.0,683.43 L1031.5,686.28 L1032.0,689.14 L1032.5,692.00 L1033.0,694.10 L1033.5,695.43 L1034.0,695.99 L1034.5,695.78 L1035.0,695.57 L1035.5,695.36 L1036.0,695.14 L1036.5,694.93 L1037.0,694.71 L1037.5,694.50 L1038.0,694.28 L1038.5,694.16 L1039.0,694.56 L1039.5,695.49 L1040.0,696.95 L1040.5,698.85 L1041.0,700.75 L1041.5,702.65 L1042.0,704.55 L1042.5,706.45 L1043.0,708.38 L1043.5,710.33 L1044.0,712.31 L1044.5,714.32 L1045.0,716.34 L1045.5,718.36 L1046.0,720.38 L1046.5,722.41 L1047.0,724.43 L1047.5,726.45 L1048.0,728.17 L1048.5,729.38 L1049.0,730.09 L1049.5,730.30 L1050.0,730.30 L1050.5,730.30 L1051.0,730.30 L1051.5,730.30 L1052.0,730.30 L1052.5,730.30 L1053.0,730.30 L1053.5,730.30 L1054.0,730.30 L1054.5,730.30 L1055.0,730.26 L1055.5,730.18 L1056.0,730.07 L1056.5,729.93 L1057.0,729.78 L1057.5,729.64 L1058.0,729.49 L1058.5,729.35 L1059.0,729.25 L1059.5,729.22 L1060.0,729.27 L1060.5,729.39 L1061.0,729.53 L1061.5,729.68 L1062.0,729.82 L1062.5,729.97 L1063.0,730.10 L1063.5,730.21 L1064.0,730.27 L1064.5,730.30 L1065.0,730.30 L1065.5,730.30 L1066.0,730.30 L1066.5,730.30 L1067.0,730.30 L1067.5,730.30 L1068.0,730.30 L1068.5,730.30 L1069.0,730.30 L1069.5,730.30 L1070.0,730.30 L1070.5,730.30 L1071.0,730.30 L1071.5,730.30 L1072.0,730.30 L1072.5,730.22 L1073.0,730.00 L1073.5,729.65 L1074.0,729.17 L1074.5,728.64 L1075.0,728.11 L1075.5,727.58 L1076.0,727.28 L1076.5,727.24 L1077.0,727.47 L1077.5,727.97 L1078.0,728.50 L1078.5,729.03 L1079.0,729.55 L1079.5,729.93 L1080.0,730.18 L1080.5,730.30 L1081.0,730.30 L1081.5,730.30 L1082.0,730.30 L1082.5,730.30 L1083.0,730.30 L1083.5,730.30 L1084.0,730.30 L1084.5,730.30 L1085.0,730.30 L1085.5,730.30 L1086.0,730.30 L1086.5,730.30 L1087.0,727.95 L1087.5,723.03 L1088.0,715.56 L1088.5,705.51 L1089.0,695.26 L1089.5,685.00 L1090.0,674.75 L1090.5,664.69 L1091.0,655.05 L1091.5,645.81 L1092.0,636.99 L1092.5,628.38 L1093.0,619.77 L1093.5,612.04 L1094.0,606.46 L1094.5,605.50 L1095.0,605.50 L1095.5,605.50 L1096.0,605.50 L1096.5,605.50 L1097.0,605.50 L1097.5,605.50 L1098.0,605.50 L1098.5,605.50 L1099.0,605.50 L1099.5,605.50 L1100.0,605.50 L1100.5,605.50 L1101.0,605.50 L1101.5,605.50 L1102.0,605.50 L1102.5,605.50 L1103.0,605.50 L1103,730.3 Z"/>
</svg>
<div class="lb" style="left:265px;top:744px;background:#3daee9"></div>
<div class="t s13" style="left:273px;top:747px;transform:scaleX(1.035);">Downloa...</div><div class="t s13" style="left:345px;top:747px;transform:scaleX(0.985);">646.2 KiB/s</div>
<div class="lb" style="left:430px;top:744px;background:#e9783d"></div>
<div class="t s13" style="left:438px;top:747px;">Upload...</div><div class="t s13" style="left:499px;top:747px;transform:scaleX(0.985);">25.5 KiB/s</div>

</body></html>
